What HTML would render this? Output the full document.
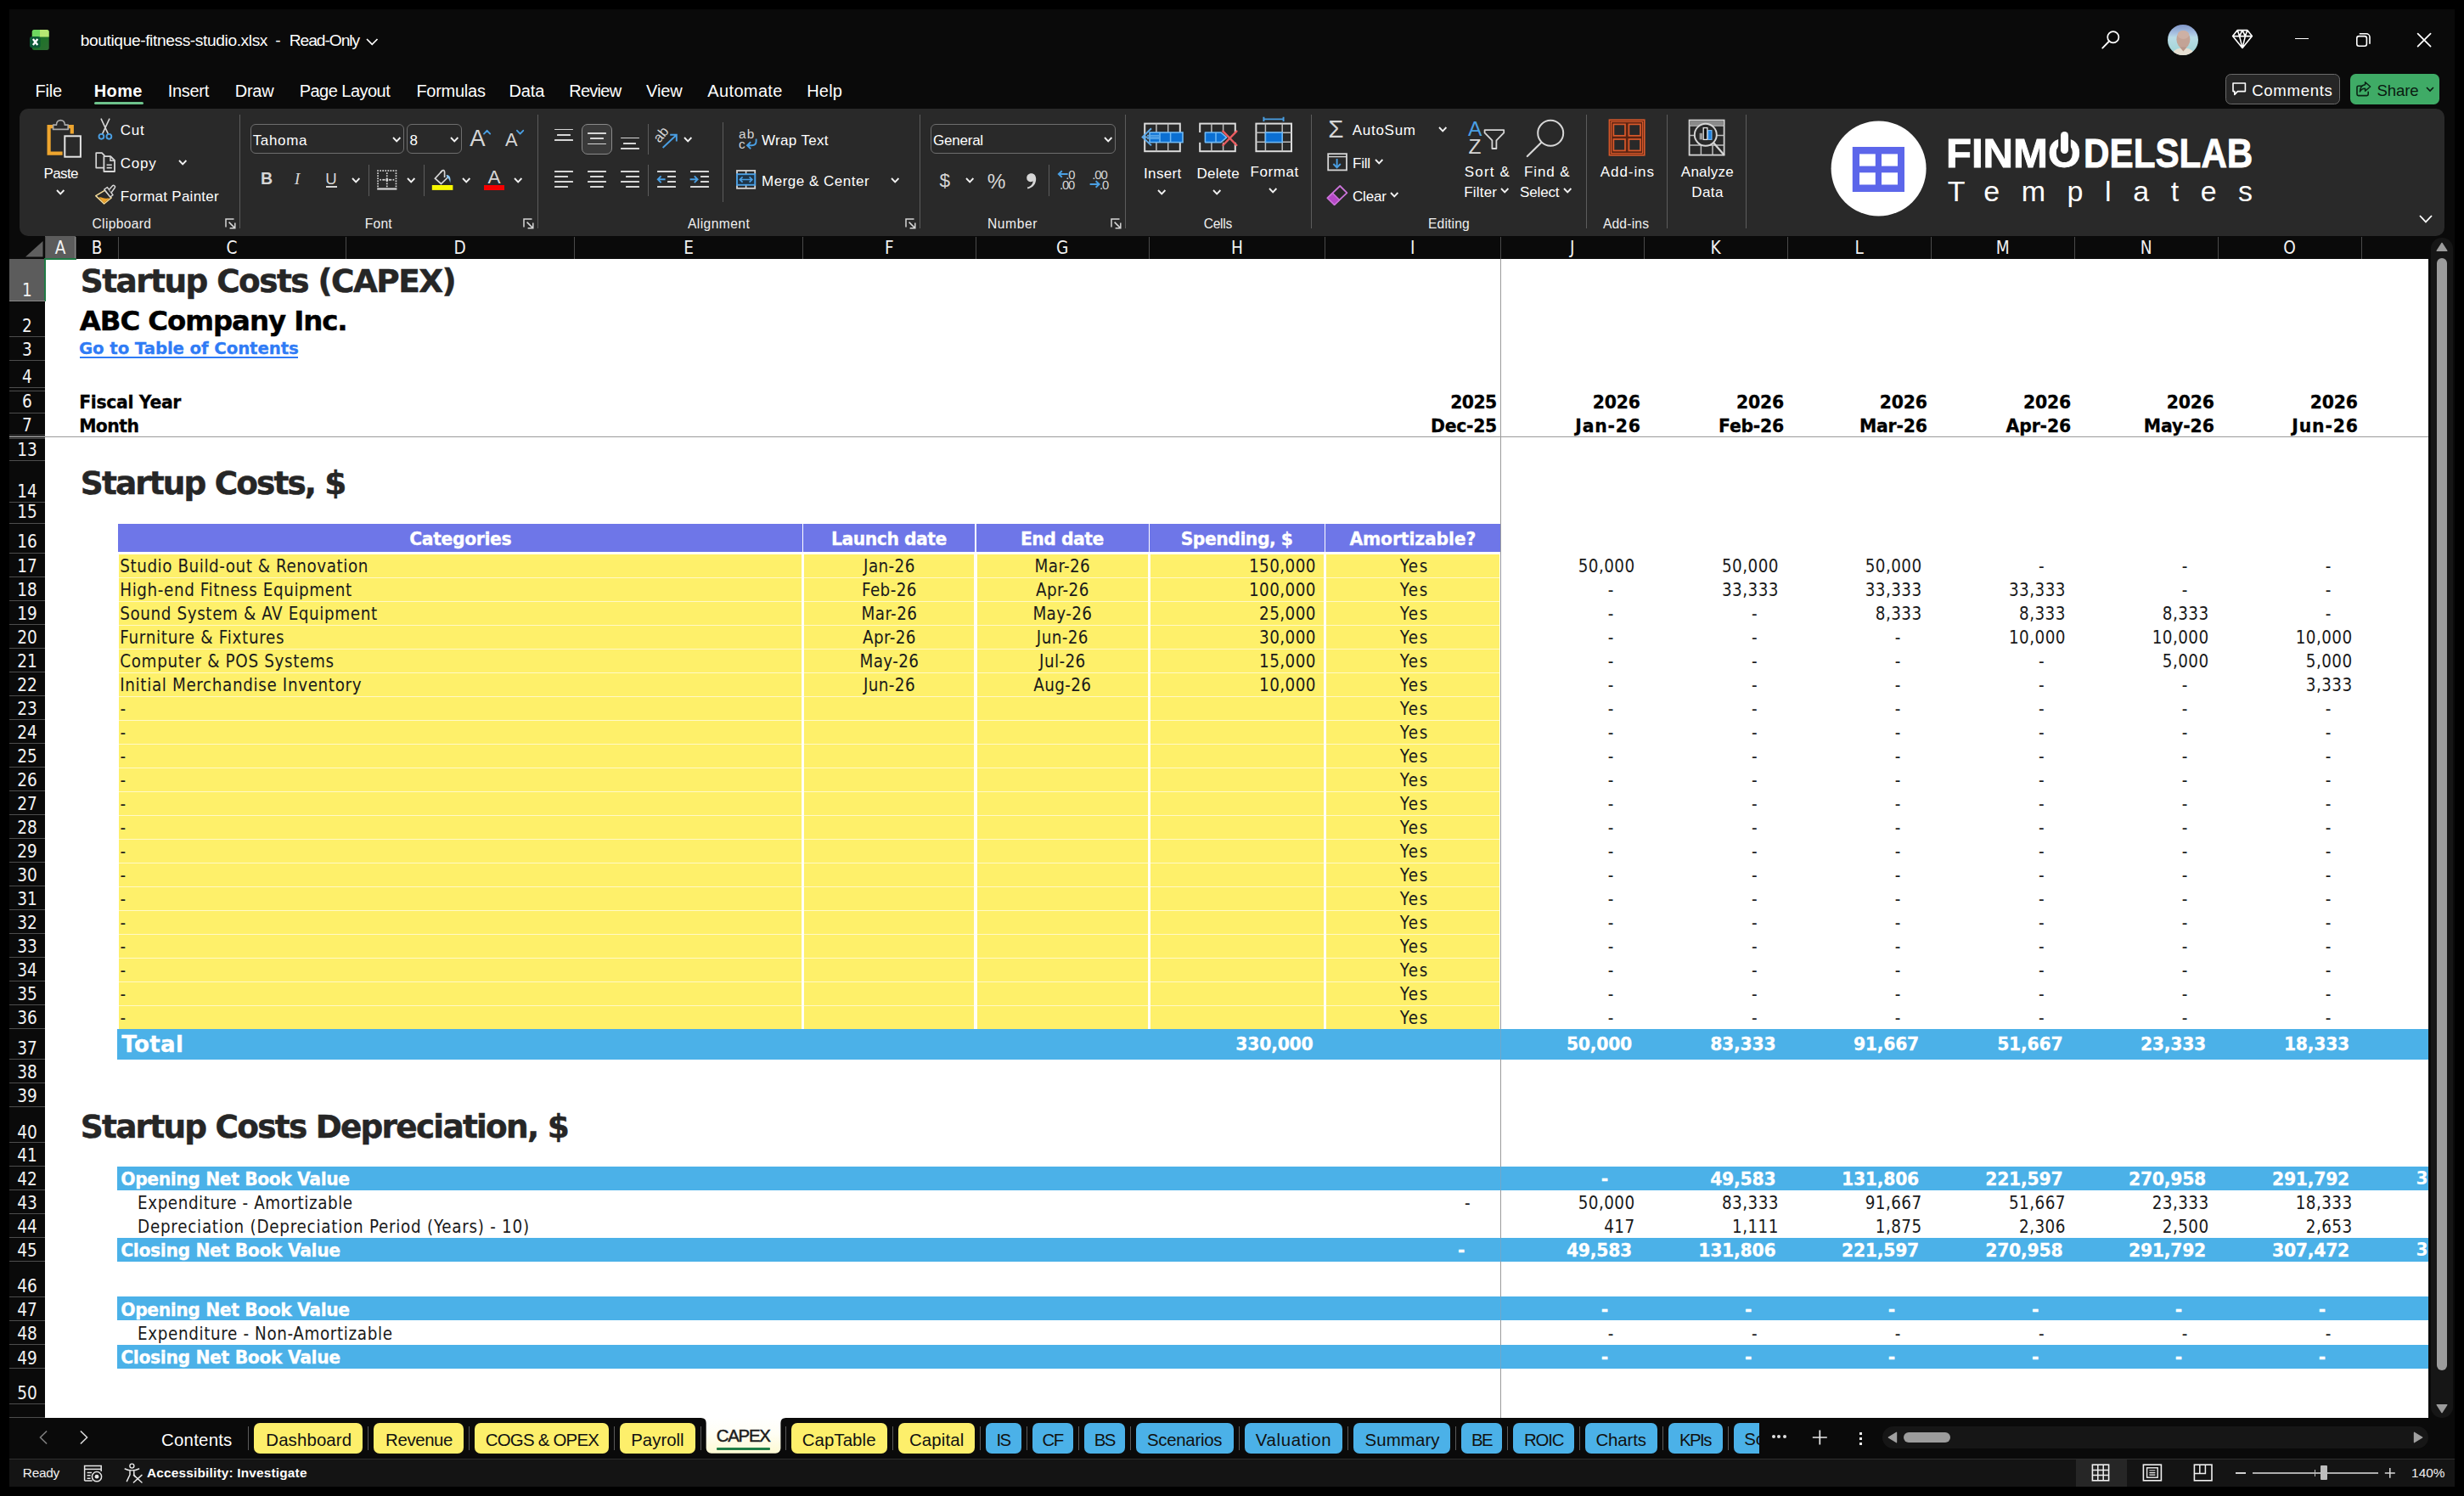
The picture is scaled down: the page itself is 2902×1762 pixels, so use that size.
<!DOCTYPE html>
<html lang="en"><head><meta charset="utf-8"><title>boutique-fitness-studio.xlsx - Excel</title>
<style>
html,body{margin:0;padding:0;background:#000;}
body{width:2902px;height:1762px;position:relative;overflow:hidden;font-family:"Liberation Sans","DejaVu Sans",sans-serif;}
div,span.t,svg,main,header,section,footer{position:absolute;box-sizing:border-box;display:block;}
span.t{line-height:1;white-space:pre;}

</style></head>
<body>
<div style="left:11px;top:11px;width:2880px;height:1740px;background:#0a0a0a;"></div>
<main id="sheet" style="left:0;top:0;width:0;height:0;overflow:visible">
<div style="left:53px;top:305px;width:2807px;height:1365px;background:#fff;"></div>
<div style="left:11px;top:278px;width:2880px;height:27px;background:#0a0a0a;"></div>
<svg style="left:11px;top:278px" width="42" height="27" viewBox="0 0 42 27"><path d="M39.5 6 L39.5 24.5 L19 24.5 Z" fill="#5f5f5f"/></svg>
<div style="left:53px;top:278px;width:36px;height:27px;background:#5c5c5c;"></div>
<div style="left:53px;top:304px;width:37px;height:1.6px;background:#1f7a45;"></div>
<div style="left:88.4px;top:279px;width:1.2px;height:25px;background:#8c8c8c;"></div>
<div style="left:52.6px;top:279px;width:1.2px;height:25px;background:#8c8c8c;"></div>
<span class="t" style="left:64.66px;top:282.40px;font-family:'DejaVu Sans Condensed','DejaVu Sans','Liberation Sans',sans-serif;font-size:20.6px;color:#f2f2f2;">A</span>
<div style="left:88.5px;top:279px;width:1px;height:26px;background:#4a4a4a;"></div>
<span class="t" style="left:107.64px;top:282.40px;font-family:'DejaVu Sans Condensed','DejaVu Sans','Liberation Sans',sans-serif;font-size:20.6px;color:#f2f2f2;">B</span>
<div style="left:138.5px;top:279px;width:1px;height:26px;background:#4a4a4a;"></div>
<span class="t" style="left:266.52px;top:282.40px;font-family:'DejaVu Sans Condensed','DejaVu Sans','Liberation Sans',sans-serif;font-size:20.6px;color:#f2f2f2;">C</span>
<div style="left:406.5px;top:279px;width:1px;height:26px;background:#4a4a4a;"></div>
<span class="t" style="left:534.61px;top:282.40px;font-family:'DejaVu Sans Condensed','DejaVu Sans','Liberation Sans',sans-serif;font-size:20.6px;color:#f2f2f2;">D</span>
<div style="left:676px;top:279px;width:1px;height:26px;background:#4a4a4a;"></div>
<span class="t" style="left:805.14px;top:282.40px;font-family:'DejaVu Sans Condensed','DejaVu Sans','Liberation Sans',sans-serif;font-size:20.6px;color:#f2f2f2;">E</span>
<div style="left:945px;top:279px;width:1px;height:26px;background:#4a4a4a;"></div>
<span class="t" style="left:1041.91px;top:282.40px;font-family:'DejaVu Sans Condensed','DejaVu Sans','Liberation Sans',sans-serif;font-size:20.6px;color:#f2f2f2;">F</span>
<div style="left:1148.5px;top:279px;width:1px;height:26px;background:#4a4a4a;"></div>
<span class="t" style="left:1243.97px;top:282.40px;font-family:'DejaVu Sans Condensed','DejaVu Sans','Liberation Sans',sans-serif;font-size:20.6px;color:#f2f2f2;">G</span>
<div style="left:1352.8px;top:279px;width:1px;height:26px;background:#4a4a4a;"></div>
<span class="t" style="left:1449.88px;top:282.40px;font-family:'DejaVu Sans Condensed','DejaVu Sans','Liberation Sans',sans-serif;font-size:20.6px;color:#f2f2f2;">H</span>
<div style="left:1559.9px;top:279px;width:1px;height:26px;background:#4a4a4a;"></div>
<span class="t" style="left:1661.12px;top:282.40px;font-family:'DejaVu Sans Condensed','DejaVu Sans','Liberation Sans',sans-serif;font-size:20.6px;color:#f2f2f2;">I</span>
<div style="left:1766.8px;top:279px;width:1px;height:26px;background:#4a4a4a;"></div>
<span class="t" style="left:1848.92px;top:282.40px;font-family:'DejaVu Sans Condensed','DejaVu Sans','Liberation Sans',sans-serif;font-size:20.6px;color:#f2f2f2;">J</span>
<div style="left:1935.5px;top:279px;width:1px;height:26px;background:#4a4a4a;"></div>
<span class="t" style="left:2014.57px;top:282.40px;font-family:'DejaVu Sans Condensed','DejaVu Sans','Liberation Sans',sans-serif;font-size:20.6px;color:#f2f2f2;">K</span>
<div style="left:2104.8px;top:279px;width:1px;height:26px;background:#4a4a4a;"></div>
<span class="t" style="left:2184.49px;top:282.40px;font-family:'DejaVu Sans Condensed','DejaVu Sans','Liberation Sans',sans-serif;font-size:20.6px;color:#f2f2f2;">L</span>
<div style="left:2273.5px;top:279px;width:1px;height:26px;background:#4a4a4a;"></div>
<span class="t" style="left:2350.65px;top:282.40px;font-family:'DejaVu Sans Condensed','DejaVu Sans','Liberation Sans',sans-serif;font-size:20.6px;color:#f2f2f2;">M</span>
<div style="left:2442.8px;top:279px;width:1px;height:26px;background:#4a4a4a;"></div>
<span class="t" style="left:2520.72px;top:282.40px;font-family:'DejaVu Sans Condensed','DejaVu Sans','Liberation Sans',sans-serif;font-size:20.6px;color:#f2f2f2;">N</span>
<div style="left:2611.5px;top:279px;width:1px;height:26px;background:#4a4a4a;"></div>
<span class="t" style="left:2689.20px;top:282.40px;font-family:'DejaVu Sans Condensed','DejaVu Sans','Liberation Sans',sans-serif;font-size:20.6px;color:#f2f2f2;">O</span>
<div style="left:2780.5px;top:279px;width:1px;height:26px;background:#4a4a4a;"></div>
<div style="left:2859.5px;top:279px;width:1px;height:26px;background:#4a4a4a;"></div>
<div style="left:52.5px;top:279px;width:1px;height:26px;background:#4a4a4a;"></div>
<div style="left:11px;top:305px;width:42px;height:1365px;background:#0a0a0a;"></div>
<div style="left:11px;top:305px;width:42px;height:49.4px;background:#5c5c5c;"></div>
<div style="left:52px;top:304px;width:1.6px;height:51.4px;background:#1f7a45;"></div>
<span class="t" style="left:26.10px;top:331.80px;font-family:'DejaVu Sans Condensed','DejaVu Sans','Liberation Sans',sans-serif;font-size:20.6px;color:#f2f2f2;">1</span>
<div style="left:11px;top:353.9px;width:42px;height:1px;background:#8a8a8a;"></div>
<span class="t" style="left:26.10px;top:374.20px;font-family:'DejaVu Sans Condensed','DejaVu Sans','Liberation Sans',sans-serif;font-size:20.6px;color:#f2f2f2;">2</span>
<div style="left:11px;top:396.3px;width:42px;height:1px;background:#4d4d4d;"></div>
<span class="t" style="left:26.10px;top:401.80px;font-family:'DejaVu Sans Condensed','DejaVu Sans','Liberation Sans',sans-serif;font-size:20.6px;color:#f2f2f2;">3</span>
<div style="left:11px;top:423.9px;width:42px;height:1px;background:#4d4d4d;"></div>
<span class="t" style="left:26.10px;top:434.10px;font-family:'DejaVu Sans Condensed','DejaVu Sans','Liberation Sans',sans-serif;font-size:20.6px;color:#f2f2f2;">4</span>
<div style="left:11px;top:456.2px;width:42px;height:1px;background:#4d4d4d;"></div>
<span class="t" style="left:26.10px;top:463.40px;font-family:'DejaVu Sans Condensed','DejaVu Sans','Liberation Sans',sans-serif;font-size:20.6px;color:#f2f2f2;">6</span>
<div style="left:11px;top:485.5px;width:42px;height:1px;background:#4d4d4d;"></div>
<span class="t" style="left:26.10px;top:491.40px;font-family:'DejaVu Sans Condensed','DejaVu Sans','Liberation Sans',sans-serif;font-size:20.6px;color:#f2f2f2;">7</span>
<div style="left:11px;top:513.5px;width:42px;height:1px;background:#4d4d4d;"></div>
<span class="t" style="left:20.21px;top:519.80px;font-family:'DejaVu Sans Condensed','DejaVu Sans','Liberation Sans',sans-serif;font-size:20.6px;color:#f2f2f2;">13</span>
<div style="left:11px;top:541.9px;width:42px;height:1px;background:#4d4d4d;"></div>
<span class="t" style="left:20.21px;top:568.60px;font-family:'DejaVu Sans Condensed','DejaVu Sans','Liberation Sans',sans-serif;font-size:20.6px;color:#f2f2f2;">14</span>
<div style="left:11px;top:590.7px;width:42px;height:1px;background:#4d4d4d;"></div>
<span class="t" style="left:20.21px;top:593.40px;font-family:'DejaVu Sans Condensed','DejaVu Sans','Liberation Sans',sans-serif;font-size:20.6px;color:#f2f2f2;">15</span>
<div style="left:11px;top:615.5px;width:42px;height:1px;background:#4d4d4d;"></div>
<span class="t" style="left:20.21px;top:628.40px;font-family:'DejaVu Sans Condensed','DejaVu Sans','Liberation Sans',sans-serif;font-size:20.6px;color:#f2f2f2;">16</span>
<div style="left:11px;top:650.5px;width:42px;height:1px;background:#4d4d4d;"></div>
<span class="t" style="left:20.21px;top:657.00px;font-family:'DejaVu Sans Condensed','DejaVu Sans','Liberation Sans',sans-serif;font-size:20.6px;color:#f2f2f2;">17</span>
<div style="left:11px;top:678.5px;width:42px;height:1px;background:#4d4d4d;"></div>
<span class="t" style="left:20.21px;top:685.00px;font-family:'DejaVu Sans Condensed','DejaVu Sans','Liberation Sans',sans-serif;font-size:20.6px;color:#f2f2f2;">18</span>
<div style="left:11px;top:706.5px;width:42px;height:1px;background:#4d4d4d;"></div>
<span class="t" style="left:20.21px;top:713.00px;font-family:'DejaVu Sans Condensed','DejaVu Sans','Liberation Sans',sans-serif;font-size:20.6px;color:#f2f2f2;">19</span>
<div style="left:11px;top:734.5px;width:42px;height:1px;background:#4d4d4d;"></div>
<span class="t" style="left:20.21px;top:741.00px;font-family:'DejaVu Sans Condensed','DejaVu Sans','Liberation Sans',sans-serif;font-size:20.6px;color:#f2f2f2;">20</span>
<div style="left:11px;top:762.5px;width:42px;height:1px;background:#4d4d4d;"></div>
<span class="t" style="left:20.21px;top:769.00px;font-family:'DejaVu Sans Condensed','DejaVu Sans','Liberation Sans',sans-serif;font-size:20.6px;color:#f2f2f2;">21</span>
<div style="left:11px;top:790.5px;width:42px;height:1px;background:#4d4d4d;"></div>
<span class="t" style="left:20.21px;top:797.00px;font-family:'DejaVu Sans Condensed','DejaVu Sans','Liberation Sans',sans-serif;font-size:20.6px;color:#f2f2f2;">22</span>
<div style="left:11px;top:818.5px;width:42px;height:1px;background:#4d4d4d;"></div>
<span class="t" style="left:20.21px;top:825.00px;font-family:'DejaVu Sans Condensed','DejaVu Sans','Liberation Sans',sans-serif;font-size:20.6px;color:#f2f2f2;">23</span>
<div style="left:11px;top:846.5px;width:42px;height:1px;background:#4d4d4d;"></div>
<span class="t" style="left:20.21px;top:853.00px;font-family:'DejaVu Sans Condensed','DejaVu Sans','Liberation Sans',sans-serif;font-size:20.6px;color:#f2f2f2;">24</span>
<div style="left:11px;top:874.5px;width:42px;height:1px;background:#4d4d4d;"></div>
<span class="t" style="left:20.21px;top:881.00px;font-family:'DejaVu Sans Condensed','DejaVu Sans','Liberation Sans',sans-serif;font-size:20.6px;color:#f2f2f2;">25</span>
<div style="left:11px;top:902.5px;width:42px;height:1px;background:#4d4d4d;"></div>
<span class="t" style="left:20.21px;top:909.00px;font-family:'DejaVu Sans Condensed','DejaVu Sans','Liberation Sans',sans-serif;font-size:20.6px;color:#f2f2f2;">26</span>
<div style="left:11px;top:930.5px;width:42px;height:1px;background:#4d4d4d;"></div>
<span class="t" style="left:20.21px;top:937.00px;font-family:'DejaVu Sans Condensed','DejaVu Sans','Liberation Sans',sans-serif;font-size:20.6px;color:#f2f2f2;">27</span>
<div style="left:11px;top:958.5px;width:42px;height:1px;background:#4d4d4d;"></div>
<span class="t" style="left:20.21px;top:965.00px;font-family:'DejaVu Sans Condensed','DejaVu Sans','Liberation Sans',sans-serif;font-size:20.6px;color:#f2f2f2;">28</span>
<div style="left:11px;top:986.5px;width:42px;height:1px;background:#4d4d4d;"></div>
<span class="t" style="left:20.21px;top:993.00px;font-family:'DejaVu Sans Condensed','DejaVu Sans','Liberation Sans',sans-serif;font-size:20.6px;color:#f2f2f2;">29</span>
<div style="left:11px;top:1014.5px;width:42px;height:1px;background:#4d4d4d;"></div>
<span class="t" style="left:20.21px;top:1021.00px;font-family:'DejaVu Sans Condensed','DejaVu Sans','Liberation Sans',sans-serif;font-size:20.6px;color:#f2f2f2;">30</span>
<div style="left:11px;top:1042.5px;width:42px;height:1px;background:#4d4d4d;"></div>
<span class="t" style="left:20.21px;top:1049.00px;font-family:'DejaVu Sans Condensed','DejaVu Sans','Liberation Sans',sans-serif;font-size:20.6px;color:#f2f2f2;">31</span>
<div style="left:11px;top:1070.5px;width:42px;height:1px;background:#4d4d4d;"></div>
<span class="t" style="left:20.21px;top:1077.00px;font-family:'DejaVu Sans Condensed','DejaVu Sans','Liberation Sans',sans-serif;font-size:20.6px;color:#f2f2f2;">32</span>
<div style="left:11px;top:1098.5px;width:42px;height:1px;background:#4d4d4d;"></div>
<span class="t" style="left:20.21px;top:1105.00px;font-family:'DejaVu Sans Condensed','DejaVu Sans','Liberation Sans',sans-serif;font-size:20.6px;color:#f2f2f2;">33</span>
<div style="left:11px;top:1126.5px;width:42px;height:1px;background:#4d4d4d;"></div>
<span class="t" style="left:20.21px;top:1133.00px;font-family:'DejaVu Sans Condensed','DejaVu Sans','Liberation Sans',sans-serif;font-size:20.6px;color:#f2f2f2;">34</span>
<div style="left:11px;top:1154.5px;width:42px;height:1px;background:#4d4d4d;"></div>
<span class="t" style="left:20.21px;top:1161.00px;font-family:'DejaVu Sans Condensed','DejaVu Sans','Liberation Sans',sans-serif;font-size:20.6px;color:#f2f2f2;">35</span>
<div style="left:11px;top:1182.5px;width:42px;height:1px;background:#4d4d4d;"></div>
<span class="t" style="left:20.21px;top:1189.00px;font-family:'DejaVu Sans Condensed','DejaVu Sans','Liberation Sans',sans-serif;font-size:20.6px;color:#f2f2f2;">36</span>
<div style="left:11px;top:1210.5px;width:42px;height:1px;background:#4d4d4d;"></div>
<span class="t" style="left:20.21px;top:1225.40px;font-family:'DejaVu Sans Condensed','DejaVu Sans','Liberation Sans',sans-serif;font-size:20.6px;color:#f2f2f2;">37</span>
<div style="left:11px;top:1246.9px;width:42px;height:1px;background:#4d4d4d;"></div>
<span class="t" style="left:20.21px;top:1253.40px;font-family:'DejaVu Sans Condensed','DejaVu Sans','Liberation Sans',sans-serif;font-size:20.6px;color:#f2f2f2;">38</span>
<div style="left:11px;top:1274.9px;width:42px;height:1px;background:#4d4d4d;"></div>
<span class="t" style="left:20.21px;top:1281.40px;font-family:'DejaVu Sans Condensed','DejaVu Sans','Liberation Sans',sans-serif;font-size:20.6px;color:#f2f2f2;">39</span>
<div style="left:11px;top:1302.9px;width:42px;height:1px;background:#4d4d4d;"></div>
<span class="t" style="left:20.21px;top:1323.80px;font-family:'DejaVu Sans Condensed','DejaVu Sans','Liberation Sans',sans-serif;font-size:20.6px;color:#f2f2f2;">40</span>
<div style="left:11px;top:1345.3px;width:42px;height:1px;background:#4d4d4d;"></div>
<span class="t" style="left:20.21px;top:1351.20px;font-family:'DejaVu Sans Condensed','DejaVu Sans','Liberation Sans',sans-serif;font-size:20.6px;color:#f2f2f2;">41</span>
<div style="left:11px;top:1372.7px;width:42px;height:1px;background:#4d4d4d;"></div>
<span class="t" style="left:20.21px;top:1379.20px;font-family:'DejaVu Sans Condensed','DejaVu Sans','Liberation Sans',sans-serif;font-size:20.6px;color:#f2f2f2;">42</span>
<div style="left:11px;top:1400.7px;width:42px;height:1px;background:#4d4d4d;"></div>
<span class="t" style="left:20.21px;top:1407.20px;font-family:'DejaVu Sans Condensed','DejaVu Sans','Liberation Sans',sans-serif;font-size:20.6px;color:#f2f2f2;">43</span>
<div style="left:11px;top:1428.7px;width:42px;height:1px;background:#4d4d4d;"></div>
<span class="t" style="left:20.21px;top:1435.20px;font-family:'DejaVu Sans Condensed','DejaVu Sans','Liberation Sans',sans-serif;font-size:20.6px;color:#f2f2f2;">44</span>
<div style="left:11px;top:1456.7px;width:42px;height:1px;background:#4d4d4d;"></div>
<span class="t" style="left:20.21px;top:1463.40px;font-family:'DejaVu Sans Condensed','DejaVu Sans','Liberation Sans',sans-serif;font-size:20.6px;color:#f2f2f2;">45</span>
<div style="left:11px;top:1484.9px;width:42px;height:1px;background:#4d4d4d;"></div>
<span class="t" style="left:20.21px;top:1505.00px;font-family:'DejaVu Sans Condensed','DejaVu Sans','Liberation Sans',sans-serif;font-size:20.6px;color:#f2f2f2;">46</span>
<div style="left:11px;top:1526.5px;width:42px;height:1px;background:#4d4d4d;"></div>
<span class="t" style="left:20.21px;top:1533.00px;font-family:'DejaVu Sans Condensed','DejaVu Sans','Liberation Sans',sans-serif;font-size:20.6px;color:#f2f2f2;">47</span>
<div style="left:11px;top:1554.5px;width:42px;height:1px;background:#4d4d4d;"></div>
<span class="t" style="left:20.21px;top:1561.40px;font-family:'DejaVu Sans Condensed','DejaVu Sans','Liberation Sans',sans-serif;font-size:20.6px;color:#f2f2f2;">48</span>
<div style="left:11px;top:1582.9px;width:42px;height:1px;background:#4d4d4d;"></div>
<span class="t" style="left:20.21px;top:1589.50px;font-family:'DejaVu Sans Condensed','DejaVu Sans','Liberation Sans',sans-serif;font-size:20.6px;color:#f2f2f2;">49</span>
<div style="left:11px;top:1611px;width:42px;height:1px;background:#4d4d4d;"></div>
<span class="t" style="left:20.21px;top:1631.40px;font-family:'DejaVu Sans Condensed','DejaVu Sans','Liberation Sans',sans-serif;font-size:20.6px;color:#f2f2f2;">50</span>
<div style="left:11px;top:1652.9px;width:42px;height:1px;background:#4d4d4d;"></div>
<div style="left:11px;top:459.5px;width:42px;height:1px;background:#4d4d4d;"></div>
<div style="left:11px;top:512px;width:42px;height:1px;background:#4d4d4d;"></div>
<div style="left:11px;top:516px;width:42px;height:1px;background:#4d4d4d;"></div>
<div style="left:11px;top:1669px;width:42px;height:1px;background:#4d4d4d;"></div>
<div style="left:138.8px;top:617px;width:1628.2px;height:32.8px;background:#6e76e8;"></div>
<div style="left:944.8px;top:617px;width:1.4px;height:32.8px;background:#fff;"></div>
<div style="left:1148.3px;top:617px;width:1.4px;height:32.8px;background:#fff;"></div>
<div style="left:1352.6px;top:617px;width:1.4px;height:32.8px;background:#fff;"></div>
<div style="left:1559.7px;top:617px;width:1.4px;height:32.8px;background:#fff;"></div>
<div style="left:140px;top:653px;width:1626.4px;height:559px;background:#fef06a;"></div>
<div style="left:140px;top:679.6px;width:1626.4px;height:1.4px;background:#fff9c6;"></div>
<div style="left:140px;top:707.6px;width:1626.4px;height:1.4px;background:#fff9c6;"></div>
<div style="left:140px;top:735.6px;width:1626.4px;height:1.4px;background:#fff9c6;"></div>
<div style="left:140px;top:763.6px;width:1626.4px;height:1.4px;background:#fff9c6;"></div>
<div style="left:140px;top:791.6px;width:1626.4px;height:1.4px;background:#fff9c6;"></div>
<div style="left:140px;top:819.6px;width:1626.4px;height:1.4px;background:#fff9c6;"></div>
<div style="left:140px;top:847.6px;width:1626.4px;height:1.4px;background:#fff9c6;"></div>
<div style="left:140px;top:875.6px;width:1626.4px;height:1.4px;background:#fff9c6;"></div>
<div style="left:140px;top:903.6px;width:1626.4px;height:1.4px;background:#fff9c6;"></div>
<div style="left:140px;top:931.6px;width:1626.4px;height:1.4px;background:#fff9c6;"></div>
<div style="left:140px;top:959.6px;width:1626.4px;height:1.4px;background:#fff9c6;"></div>
<div style="left:140px;top:987.6px;width:1626.4px;height:1.4px;background:#fff9c6;"></div>
<div style="left:140px;top:1015.6px;width:1626.4px;height:1.4px;background:#fff9c6;"></div>
<div style="left:140px;top:1043.6px;width:1626.4px;height:1.4px;background:#fff9c6;"></div>
<div style="left:140px;top:1071.6px;width:1626.4px;height:1.4px;background:#fff9c6;"></div>
<div style="left:140px;top:1099.6px;width:1626.4px;height:1.4px;background:#fff9c6;"></div>
<div style="left:140px;top:1127.6px;width:1626.4px;height:1.4px;background:#fff9c6;"></div>
<div style="left:140px;top:1155.6px;width:1626.4px;height:1.4px;background:#fff9c6;"></div>
<div style="left:140px;top:1183.6px;width:1626.4px;height:1.4px;background:#fff9c6;"></div>
<div style="left:943.8px;top:653px;width:3.4px;height:559.5px;background:#fffef6;"></div>
<div style="left:1147.3px;top:653px;width:3.4px;height:559.5px;background:#fffef6;"></div>
<div style="left:1351.6px;top:653px;width:3.4px;height:559.5px;background:#fffef6;"></div>
<div style="left:1558.7px;top:653px;width:3.4px;height:559.5px;background:#fffef6;"></div>
<div style="left:138px;top:1212px;width:2722px;height:35.7px;background:#4bb1e8;"></div>
<div style="left:138px;top:1373.5px;width:2722px;height:28px;background:#4bb1e8;"></div>
<div style="left:138px;top:1457.5px;width:2722px;height:28.2px;background:#4bb1e8;"></div>
<div style="left:138px;top:1527.3px;width:2722px;height:28px;background:#4bb1e8;"></div>
<div style="left:138px;top:1583.7px;width:2722px;height:28.1px;background:#4bb1e8;"></div>
<div style="left:53px;top:514px;width:2807px;height:1.2px;background:#9b9b9b;"></div>
<div style="left:11px;top:513.8px;width:42px;height:1.4px;background:#d0d0d0;"></div>
<div style="left:1766.9px;top:305px;width:1.2px;height:1365px;background:#9b9b9b;"></div>
<div style="left:1766.9px;top:1212px;width:1.2px;height:35.7px;background:#6fa7cb;"></div>
<div style="left:1766.9px;top:1373.5px;width:1.2px;height:28px;background:#6fa7cb;"></div>
<div style="left:1766.9px;top:1457.5px;width:1.2px;height:28.2px;background:#6fa7cb;"></div>
<div style="left:1766.9px;top:1527.3px;width:1.2px;height:28px;background:#6fa7cb;"></div>
<div style="left:1766.9px;top:1583.7px;width:1.2px;height:28.1px;background:#6fa7cb;"></div>
<span class="t" style="left:94.82px;top:313.30px;font-family:'DejaVu Sans','Liberation Sans',sans-serif;font-size:37.4px;color:#262626;font-weight:700;letter-spacing:-1.542px;-webkit-text-stroke:0.52px #262626;">Startup Costs (CAPEX)</span>
<span class="t" style="left:93.74px;top:361.60px;font-family:'DejaVu Sans','Liberation Sans',sans-serif;font-size:32.4px;color:#000;font-weight:700;letter-spacing:-1.052px;-webkit-text-stroke:0.45px #000;">ABC Company Inc.</span>
<span class="t" style="left:93.01px;top:401.10px;font-family:'DejaVu Sans','Liberation Sans',sans-serif;font-size:19.8px;color:#2f7bf5;font-weight:700;letter-spacing:-0.130px;-webkit-text-stroke:0.28px #2f7bf5;">Go to Table of Contents</span>
<div style="left:93.7px;top:420px;width:257.2px;height:2px;background:#2f7bf5;"></div>
<span class="t" style="left:93.18px;top:463.50px;font-family:'DejaVu Sans','Liberation Sans',sans-serif;font-size:20.4px;color:#000;font-weight:700;letter-spacing:-0.330px;-webkit-text-stroke:0.29px #000;">Fiscal Year</span>
<span class="t" style="left:93.18px;top:491.60px;font-family:'DejaVu Sans','Liberation Sans',sans-serif;font-size:20.4px;color:#000;font-weight:700;letter-spacing:-0.589px;-webkit-text-stroke:0.29px #000;">Month</span>
<span class="t" style="left:94.82px;top:550.80px;font-family:'DejaVu Sans','Liberation Sans',sans-serif;font-size:37.4px;color:#262626;font-weight:700;letter-spacing:-1.862px;-webkit-text-stroke:0.52px #262626;">Startup Costs, $</span>
<span class="t" style="left:94.82px;top:1308.60px;font-family:'DejaVu Sans','Liberation Sans',sans-serif;font-size:37.4px;color:#262626;font-weight:700;letter-spacing:-1.744px;-webkit-text-stroke:0.52px #262626;">Startup Costs Depreciation, $</span>
<span class="t" style="left:1708.18px;top:463.50px;font-family:'DejaVu Sans','Liberation Sans',sans-serif;font-size:20.4px;color:#000;font-weight:700;letter-spacing:-0.577px;-webkit-text-stroke:0.29px #000;">2025</span>
<span class="t" style="left:1685.08px;top:491.60px;font-family:'DejaVu Sans','Liberation Sans',sans-serif;font-size:20.4px;color:#000;font-weight:700;letter-spacing:-0.310px;-webkit-text-stroke:0.29px #000;">Dec-25</span>
<span class="t" style="left:1875.68px;top:463.50px;font-family:'DejaVu Sans','Liberation Sans',sans-serif;font-size:20.4px;color:#000;font-weight:700;letter-spacing:-0.177px;-webkit-text-stroke:0.29px #000;">2026</span>
<span class="t" style="left:1855.28px;top:491.60px;font-family:'DejaVu Sans','Liberation Sans',sans-serif;font-size:20.4px;color:#000;font-weight:700;letter-spacing:0.787px;-webkit-text-stroke:0.29px #000;">Jan-26</span>
<span class="t" style="left:2044.98px;top:463.50px;font-family:'DejaVu Sans','Liberation Sans',sans-serif;font-size:20.4px;color:#000;font-weight:700;letter-spacing:-0.177px;-webkit-text-stroke:0.29px #000;">2026</span>
<span class="t" style="left:2024.08px;top:491.60px;font-family:'DejaVu Sans','Liberation Sans',sans-serif;font-size:20.4px;color:#000;font-weight:700;letter-spacing:-0.248px;-webkit-text-stroke:0.29px #000;">Feb-26</span>
<span class="t" style="left:2213.68px;top:463.50px;font-family:'DejaVu Sans','Liberation Sans',sans-serif;font-size:20.4px;color:#000;font-weight:700;letter-spacing:-0.177px;-webkit-text-stroke:0.29px #000;">2026</span>
<span class="t" style="left:2189.98px;top:491.60px;font-family:'DejaVu Sans','Liberation Sans',sans-serif;font-size:20.4px;color:#000;font-weight:700;letter-spacing:-0.203px;-webkit-text-stroke:0.29px #000;">Mar-26</span>
<span class="t" style="left:2382.98px;top:463.50px;font-family:'DejaVu Sans','Liberation Sans',sans-serif;font-size:20.4px;color:#000;font-weight:700;letter-spacing:-0.177px;-webkit-text-stroke:0.29px #000;">2026</span>
<span class="t" style="left:2362.58px;top:491.60px;font-family:'DejaVu Sans','Liberation Sans',sans-serif;font-size:20.4px;color:#000;font-weight:700;letter-spacing:-0.129px;-webkit-text-stroke:0.29px #000;">Apr-26</span>
<span class="t" style="left:2551.68px;top:463.50px;font-family:'DejaVu Sans','Liberation Sans',sans-serif;font-size:20.4px;color:#000;font-weight:700;letter-spacing:-0.177px;-webkit-text-stroke:0.29px #000;">2026</span>
<span class="t" style="left:2524.68px;top:491.60px;font-family:'DejaVu Sans','Liberation Sans',sans-serif;font-size:20.4px;color:#000;font-weight:700;letter-spacing:-0.065px;-webkit-text-stroke:0.29px #000;">May-26</span>
<span class="t" style="left:2720.68px;top:463.50px;font-family:'DejaVu Sans','Liberation Sans',sans-serif;font-size:20.4px;color:#000;font-weight:700;letter-spacing:-0.177px;-webkit-text-stroke:0.29px #000;">2026</span>
<span class="t" style="left:2699.28px;top:491.60px;font-family:'DejaVu Sans','Liberation Sans',sans-serif;font-size:20.4px;color:#000;font-weight:700;letter-spacing:0.833px;-webkit-text-stroke:0.29px #000;">Jun-26</span>
<span class="t" style="left:482.28px;top:624.70px;font-family:'DejaVu Sans','Liberation Sans',sans-serif;font-size:20.4px;color:#fff;font-weight:700;letter-spacing:-0.387px;-webkit-text-stroke:0.29px #fff;">Categories</span>
<span class="t" style="left:979.08px;top:624.70px;font-family:'DejaVu Sans','Liberation Sans',sans-serif;font-size:20.4px;color:#fff;font-weight:700;letter-spacing:-0.509px;-webkit-text-stroke:0.29px #fff;">Launch date</span>
<span class="t" style="left:1201.98px;top:624.70px;font-family:'DejaVu Sans','Liberation Sans',sans-serif;font-size:20.4px;color:#fff;font-weight:700;letter-spacing:-0.535px;-webkit-text-stroke:0.29px #fff;">End date</span>
<span class="t" style="left:1390.68px;top:624.70px;font-family:'DejaVu Sans','Liberation Sans',sans-serif;font-size:20.4px;color:#fff;font-weight:700;letter-spacing:-0.502px;-webkit-text-stroke:0.29px #fff;">Spending, $</span>
<span class="t" style="left:1589.43px;top:624.70px;font-family:'DejaVu Sans','Liberation Sans',sans-serif;font-size:20.4px;color:#fff;font-weight:700;letter-spacing:-0.170px;-webkit-text-stroke:0.29px #fff;">Amortizable?</span>
<span class="t" style="left:141.28px;top:656.60px;font-family:'DejaVu Sans Condensed','DejaVu Sans','Liberation Sans',sans-serif;font-size:20.4px;color:#1a1a1a;letter-spacing:0.554px;">Studio Build-out &amp; Renovation</span>
<span class="t" style="left:1017.12px;top:656.60px;font-family:'DejaVu Sans Condensed','DejaVu Sans','Liberation Sans',sans-serif;font-size:20.4px;color:#1a1a1a;letter-spacing:0.400px;">Jan-26</span>
<span class="t" style="left:1218.52px;top:656.60px;font-family:'DejaVu Sans Condensed','DejaVu Sans','Liberation Sans',sans-serif;font-size:20.4px;color:#1a1a1a;letter-spacing:0.400px;">Mar-26</span>
<span class="t" style="left:1470.97px;top:656.60px;font-family:'DejaVu Sans Condensed','DejaVu Sans','Liberation Sans',sans-serif;font-size:20.4px;color:#1a1a1a;letter-spacing:0.450px;">150,000</span>
<span class="t" style="left:1648.85px;top:656.60px;font-family:'DejaVu Sans Condensed','DejaVu Sans','Liberation Sans',sans-serif;font-size:20.4px;color:#1a1a1a;letter-spacing:1.530px;">Yes</span>
<span class="t" style="left:1858.70px;top:656.60px;font-family:'DejaVu Sans Condensed','DejaVu Sans','Liberation Sans',sans-serif;font-size:20.4px;color:#1a1a1a;letter-spacing:0.450px;">50,000</span>
<span class="t" style="left:2028.00px;top:656.60px;font-family:'DejaVu Sans Condensed','DejaVu Sans','Liberation Sans',sans-serif;font-size:20.4px;color:#1a1a1a;letter-spacing:0.450px;">50,000</span>
<span class="t" style="left:2196.70px;top:656.60px;font-family:'DejaVu Sans Condensed','DejaVu Sans','Liberation Sans',sans-serif;font-size:20.4px;color:#1a1a1a;letter-spacing:0.450px;">50,000</span>
<span class="t" style="left:2400.99px;top:656.60px;font-family:'DejaVu Sans Condensed','DejaVu Sans','Liberation Sans',sans-serif;font-size:20.4px;color:#1a1a1a;letter-spacing:1.530px;">-</span>
<span class="t" style="left:2569.69px;top:656.60px;font-family:'DejaVu Sans Condensed','DejaVu Sans','Liberation Sans',sans-serif;font-size:20.4px;color:#1a1a1a;letter-spacing:1.530px;">-</span>
<span class="t" style="left:2738.69px;top:656.60px;font-family:'DejaVu Sans Condensed','DejaVu Sans','Liberation Sans',sans-serif;font-size:20.4px;color:#1a1a1a;letter-spacing:1.530px;">-</span>
<span class="t" style="left:141.28px;top:684.60px;font-family:'DejaVu Sans Condensed','DejaVu Sans','Liberation Sans',sans-serif;font-size:20.4px;color:#1a1a1a;letter-spacing:0.593px;">High-end Fitness Equipment</span>
<span class="t" style="left:1015.08px;top:684.60px;font-family:'DejaVu Sans Condensed','DejaVu Sans','Liberation Sans',sans-serif;font-size:20.4px;color:#1a1a1a;letter-spacing:0.400px;">Feb-26</span>
<span class="t" style="left:1219.95px;top:684.60px;font-family:'DejaVu Sans Condensed','DejaVu Sans','Liberation Sans',sans-serif;font-size:20.4px;color:#1a1a1a;letter-spacing:0.400px;">Apr-26</span>
<span class="t" style="left:1470.97px;top:684.60px;font-family:'DejaVu Sans Condensed','DejaVu Sans','Liberation Sans',sans-serif;font-size:20.4px;color:#1a1a1a;letter-spacing:0.450px;">100,000</span>
<span class="t" style="left:1648.85px;top:684.60px;font-family:'DejaVu Sans Condensed','DejaVu Sans','Liberation Sans',sans-serif;font-size:20.4px;color:#1a1a1a;letter-spacing:1.530px;">Yes</span>
<span class="t" style="left:1893.69px;top:684.60px;font-family:'DejaVu Sans Condensed','DejaVu Sans','Liberation Sans',sans-serif;font-size:20.4px;color:#1a1a1a;letter-spacing:1.530px;">-</span>
<span class="t" style="left:2028.00px;top:684.60px;font-family:'DejaVu Sans Condensed','DejaVu Sans','Liberation Sans',sans-serif;font-size:20.4px;color:#1a1a1a;letter-spacing:0.450px;">33,333</span>
<span class="t" style="left:2196.70px;top:684.60px;font-family:'DejaVu Sans Condensed','DejaVu Sans','Liberation Sans',sans-serif;font-size:20.4px;color:#1a1a1a;letter-spacing:0.450px;">33,333</span>
<span class="t" style="left:2366.00px;top:684.60px;font-family:'DejaVu Sans Condensed','DejaVu Sans','Liberation Sans',sans-serif;font-size:20.4px;color:#1a1a1a;letter-spacing:0.450px;">33,333</span>
<span class="t" style="left:2569.69px;top:684.60px;font-family:'DejaVu Sans Condensed','DejaVu Sans','Liberation Sans',sans-serif;font-size:20.4px;color:#1a1a1a;letter-spacing:1.530px;">-</span>
<span class="t" style="left:2738.69px;top:684.60px;font-family:'DejaVu Sans Condensed','DejaVu Sans','Liberation Sans',sans-serif;font-size:20.4px;color:#1a1a1a;letter-spacing:1.530px;">-</span>
<span class="t" style="left:141.28px;top:712.60px;font-family:'DejaVu Sans Condensed','DejaVu Sans','Liberation Sans',sans-serif;font-size:20.4px;color:#1a1a1a;letter-spacing:0.602px;">Sound System &amp; AV Equipment</span>
<span class="t" style="left:1014.62px;top:712.60px;font-family:'DejaVu Sans Condensed','DejaVu Sans','Liberation Sans',sans-serif;font-size:20.4px;color:#1a1a1a;letter-spacing:0.400px;">Mar-26</span>
<span class="t" style="left:1216.38px;top:712.60px;font-family:'DejaVu Sans Condensed','DejaVu Sans','Liberation Sans',sans-serif;font-size:20.4px;color:#1a1a1a;letter-spacing:0.400px;">May-26</span>
<span class="t" style="left:1483.10px;top:712.60px;font-family:'DejaVu Sans Condensed','DejaVu Sans','Liberation Sans',sans-serif;font-size:20.4px;color:#1a1a1a;letter-spacing:0.450px;">25,000</span>
<span class="t" style="left:1648.85px;top:712.60px;font-family:'DejaVu Sans Condensed','DejaVu Sans','Liberation Sans',sans-serif;font-size:20.4px;color:#1a1a1a;letter-spacing:1.530px;">Yes</span>
<span class="t" style="left:1893.69px;top:712.60px;font-family:'DejaVu Sans Condensed','DejaVu Sans','Liberation Sans',sans-serif;font-size:20.4px;color:#1a1a1a;letter-spacing:1.530px;">-</span>
<span class="t" style="left:2062.99px;top:712.60px;font-family:'DejaVu Sans Condensed','DejaVu Sans','Liberation Sans',sans-serif;font-size:20.4px;color:#1a1a1a;letter-spacing:1.530px;">-</span>
<span class="t" style="left:2208.82px;top:712.60px;font-family:'DejaVu Sans Condensed','DejaVu Sans','Liberation Sans',sans-serif;font-size:20.4px;color:#1a1a1a;letter-spacing:0.450px;">8,333</span>
<span class="t" style="left:2378.12px;top:712.60px;font-family:'DejaVu Sans Condensed','DejaVu Sans','Liberation Sans',sans-serif;font-size:20.4px;color:#1a1a1a;letter-spacing:0.450px;">8,333</span>
<span class="t" style="left:2546.82px;top:712.60px;font-family:'DejaVu Sans Condensed','DejaVu Sans','Liberation Sans',sans-serif;font-size:20.4px;color:#1a1a1a;letter-spacing:0.450px;">8,333</span>
<span class="t" style="left:2738.69px;top:712.60px;font-family:'DejaVu Sans Condensed','DejaVu Sans','Liberation Sans',sans-serif;font-size:20.4px;color:#1a1a1a;letter-spacing:1.530px;">-</span>
<span class="t" style="left:141.28px;top:740.60px;font-family:'DejaVu Sans Condensed','DejaVu Sans','Liberation Sans',sans-serif;font-size:20.4px;color:#1a1a1a;letter-spacing:0.707px;">Furniture &amp; Fixtures</span>
<span class="t" style="left:1016.05px;top:740.60px;font-family:'DejaVu Sans Condensed','DejaVu Sans','Liberation Sans',sans-serif;font-size:20.4px;color:#1a1a1a;letter-spacing:0.400px;">Apr-26</span>
<span class="t" style="left:1220.84px;top:740.60px;font-family:'DejaVu Sans Condensed','DejaVu Sans','Liberation Sans',sans-serif;font-size:20.4px;color:#1a1a1a;letter-spacing:0.400px;">Jun-26</span>
<span class="t" style="left:1483.10px;top:740.60px;font-family:'DejaVu Sans Condensed','DejaVu Sans','Liberation Sans',sans-serif;font-size:20.4px;color:#1a1a1a;letter-spacing:0.450px;">30,000</span>
<span class="t" style="left:1648.85px;top:740.60px;font-family:'DejaVu Sans Condensed','DejaVu Sans','Liberation Sans',sans-serif;font-size:20.4px;color:#1a1a1a;letter-spacing:1.530px;">Yes</span>
<span class="t" style="left:1893.69px;top:740.60px;font-family:'DejaVu Sans Condensed','DejaVu Sans','Liberation Sans',sans-serif;font-size:20.4px;color:#1a1a1a;letter-spacing:1.530px;">-</span>
<span class="t" style="left:2062.99px;top:740.60px;font-family:'DejaVu Sans Condensed','DejaVu Sans','Liberation Sans',sans-serif;font-size:20.4px;color:#1a1a1a;letter-spacing:1.530px;">-</span>
<span class="t" style="left:2231.69px;top:740.60px;font-family:'DejaVu Sans Condensed','DejaVu Sans','Liberation Sans',sans-serif;font-size:20.4px;color:#1a1a1a;letter-spacing:1.530px;">-</span>
<span class="t" style="left:2366.00px;top:740.60px;font-family:'DejaVu Sans Condensed','DejaVu Sans','Liberation Sans',sans-serif;font-size:20.4px;color:#1a1a1a;letter-spacing:0.450px;">10,000</span>
<span class="t" style="left:2534.70px;top:740.60px;font-family:'DejaVu Sans Condensed','DejaVu Sans','Liberation Sans',sans-serif;font-size:20.4px;color:#1a1a1a;letter-spacing:0.450px;">10,000</span>
<span class="t" style="left:2703.70px;top:740.60px;font-family:'DejaVu Sans Condensed','DejaVu Sans','Liberation Sans',sans-serif;font-size:20.4px;color:#1a1a1a;letter-spacing:0.450px;">10,000</span>
<span class="t" style="left:141.28px;top:768.60px;font-family:'DejaVu Sans Condensed','DejaVu Sans','Liberation Sans',sans-serif;font-size:20.4px;color:#1a1a1a;letter-spacing:0.654px;">Computer &amp; POS Systems</span>
<span class="t" style="left:1012.48px;top:768.60px;font-family:'DejaVu Sans Condensed','DejaVu Sans','Liberation Sans',sans-serif;font-size:20.4px;color:#1a1a1a;letter-spacing:0.400px;">May-26</span>
<span class="t" style="left:1224.10px;top:768.60px;font-family:'DejaVu Sans Condensed','DejaVu Sans','Liberation Sans',sans-serif;font-size:20.4px;color:#1a1a1a;letter-spacing:0.400px;">Jul-26</span>
<span class="t" style="left:1483.10px;top:768.60px;font-family:'DejaVu Sans Condensed','DejaVu Sans','Liberation Sans',sans-serif;font-size:20.4px;color:#1a1a1a;letter-spacing:0.450px;">15,000</span>
<span class="t" style="left:1648.85px;top:768.60px;font-family:'DejaVu Sans Condensed','DejaVu Sans','Liberation Sans',sans-serif;font-size:20.4px;color:#1a1a1a;letter-spacing:1.530px;">Yes</span>
<span class="t" style="left:1893.69px;top:768.60px;font-family:'DejaVu Sans Condensed','DejaVu Sans','Liberation Sans',sans-serif;font-size:20.4px;color:#1a1a1a;letter-spacing:1.530px;">-</span>
<span class="t" style="left:2062.99px;top:768.60px;font-family:'DejaVu Sans Condensed','DejaVu Sans','Liberation Sans',sans-serif;font-size:20.4px;color:#1a1a1a;letter-spacing:1.530px;">-</span>
<span class="t" style="left:2231.69px;top:768.60px;font-family:'DejaVu Sans Condensed','DejaVu Sans','Liberation Sans',sans-serif;font-size:20.4px;color:#1a1a1a;letter-spacing:1.530px;">-</span>
<span class="t" style="left:2400.99px;top:768.60px;font-family:'DejaVu Sans Condensed','DejaVu Sans','Liberation Sans',sans-serif;font-size:20.4px;color:#1a1a1a;letter-spacing:1.530px;">-</span>
<span class="t" style="left:2546.82px;top:768.60px;font-family:'DejaVu Sans Condensed','DejaVu Sans','Liberation Sans',sans-serif;font-size:20.4px;color:#1a1a1a;letter-spacing:0.450px;">5,000</span>
<span class="t" style="left:2715.82px;top:768.60px;font-family:'DejaVu Sans Condensed','DejaVu Sans','Liberation Sans',sans-serif;font-size:20.4px;color:#1a1a1a;letter-spacing:0.450px;">5,000</span>
<span class="t" style="left:141.28px;top:796.60px;font-family:'DejaVu Sans Condensed','DejaVu Sans','Liberation Sans',sans-serif;font-size:20.4px;color:#1a1a1a;letter-spacing:0.640px;">Initial Merchandise Inventory</span>
<span class="t" style="left:1016.94px;top:796.60px;font-family:'DejaVu Sans Condensed','DejaVu Sans','Liberation Sans',sans-serif;font-size:20.4px;color:#1a1a1a;letter-spacing:0.400px;">Jun-26</span>
<span class="t" style="left:1217.25px;top:796.60px;font-family:'DejaVu Sans Condensed','DejaVu Sans','Liberation Sans',sans-serif;font-size:20.4px;color:#1a1a1a;letter-spacing:0.400px;">Aug-26</span>
<span class="t" style="left:1483.10px;top:796.60px;font-family:'DejaVu Sans Condensed','DejaVu Sans','Liberation Sans',sans-serif;font-size:20.4px;color:#1a1a1a;letter-spacing:0.450px;">10,000</span>
<span class="t" style="left:1648.85px;top:796.60px;font-family:'DejaVu Sans Condensed','DejaVu Sans','Liberation Sans',sans-serif;font-size:20.4px;color:#1a1a1a;letter-spacing:1.530px;">Yes</span>
<span class="t" style="left:1893.69px;top:796.60px;font-family:'DejaVu Sans Condensed','DejaVu Sans','Liberation Sans',sans-serif;font-size:20.4px;color:#1a1a1a;letter-spacing:1.530px;">-</span>
<span class="t" style="left:2062.99px;top:796.60px;font-family:'DejaVu Sans Condensed','DejaVu Sans','Liberation Sans',sans-serif;font-size:20.4px;color:#1a1a1a;letter-spacing:1.530px;">-</span>
<span class="t" style="left:2231.69px;top:796.60px;font-family:'DejaVu Sans Condensed','DejaVu Sans','Liberation Sans',sans-serif;font-size:20.4px;color:#1a1a1a;letter-spacing:1.530px;">-</span>
<span class="t" style="left:2400.99px;top:796.60px;font-family:'DejaVu Sans Condensed','DejaVu Sans','Liberation Sans',sans-serif;font-size:20.4px;color:#1a1a1a;letter-spacing:1.530px;">-</span>
<span class="t" style="left:2569.69px;top:796.60px;font-family:'DejaVu Sans Condensed','DejaVu Sans','Liberation Sans',sans-serif;font-size:20.4px;color:#1a1a1a;letter-spacing:1.530px;">-</span>
<span class="t" style="left:2715.82px;top:796.60px;font-family:'DejaVu Sans Condensed','DejaVu Sans','Liberation Sans',sans-serif;font-size:20.4px;color:#1a1a1a;letter-spacing:0.450px;">3,333</span>
<span class="t" style="left:141.48px;top:824.60px;font-family:'DejaVu Sans Condensed','DejaVu Sans','Liberation Sans',sans-serif;font-size:20.4px;color:#1a1a1a;letter-spacing:1.530px;">-</span>
<span class="t" style="left:1648.85px;top:824.60px;font-family:'DejaVu Sans Condensed','DejaVu Sans','Liberation Sans',sans-serif;font-size:20.4px;color:#1a1a1a;letter-spacing:1.530px;">Yes</span>
<span class="t" style="left:1893.69px;top:824.60px;font-family:'DejaVu Sans Condensed','DejaVu Sans','Liberation Sans',sans-serif;font-size:20.4px;color:#1a1a1a;letter-spacing:1.530px;">-</span>
<span class="t" style="left:2062.99px;top:824.60px;font-family:'DejaVu Sans Condensed','DejaVu Sans','Liberation Sans',sans-serif;font-size:20.4px;color:#1a1a1a;letter-spacing:1.530px;">-</span>
<span class="t" style="left:2231.69px;top:824.60px;font-family:'DejaVu Sans Condensed','DejaVu Sans','Liberation Sans',sans-serif;font-size:20.4px;color:#1a1a1a;letter-spacing:1.530px;">-</span>
<span class="t" style="left:2400.99px;top:824.60px;font-family:'DejaVu Sans Condensed','DejaVu Sans','Liberation Sans',sans-serif;font-size:20.4px;color:#1a1a1a;letter-spacing:1.530px;">-</span>
<span class="t" style="left:2569.69px;top:824.60px;font-family:'DejaVu Sans Condensed','DejaVu Sans','Liberation Sans',sans-serif;font-size:20.4px;color:#1a1a1a;letter-spacing:1.530px;">-</span>
<span class="t" style="left:2738.69px;top:824.60px;font-family:'DejaVu Sans Condensed','DejaVu Sans','Liberation Sans',sans-serif;font-size:20.4px;color:#1a1a1a;letter-spacing:1.530px;">-</span>
<span class="t" style="left:141.48px;top:852.60px;font-family:'DejaVu Sans Condensed','DejaVu Sans','Liberation Sans',sans-serif;font-size:20.4px;color:#1a1a1a;letter-spacing:1.530px;">-</span>
<span class="t" style="left:1648.85px;top:852.60px;font-family:'DejaVu Sans Condensed','DejaVu Sans','Liberation Sans',sans-serif;font-size:20.4px;color:#1a1a1a;letter-spacing:1.530px;">Yes</span>
<span class="t" style="left:1893.69px;top:852.60px;font-family:'DejaVu Sans Condensed','DejaVu Sans','Liberation Sans',sans-serif;font-size:20.4px;color:#1a1a1a;letter-spacing:1.530px;">-</span>
<span class="t" style="left:2062.99px;top:852.60px;font-family:'DejaVu Sans Condensed','DejaVu Sans','Liberation Sans',sans-serif;font-size:20.4px;color:#1a1a1a;letter-spacing:1.530px;">-</span>
<span class="t" style="left:2231.69px;top:852.60px;font-family:'DejaVu Sans Condensed','DejaVu Sans','Liberation Sans',sans-serif;font-size:20.4px;color:#1a1a1a;letter-spacing:1.530px;">-</span>
<span class="t" style="left:2400.99px;top:852.60px;font-family:'DejaVu Sans Condensed','DejaVu Sans','Liberation Sans',sans-serif;font-size:20.4px;color:#1a1a1a;letter-spacing:1.530px;">-</span>
<span class="t" style="left:2569.69px;top:852.60px;font-family:'DejaVu Sans Condensed','DejaVu Sans','Liberation Sans',sans-serif;font-size:20.4px;color:#1a1a1a;letter-spacing:1.530px;">-</span>
<span class="t" style="left:2738.69px;top:852.60px;font-family:'DejaVu Sans Condensed','DejaVu Sans','Liberation Sans',sans-serif;font-size:20.4px;color:#1a1a1a;letter-spacing:1.530px;">-</span>
<span class="t" style="left:141.48px;top:880.60px;font-family:'DejaVu Sans Condensed','DejaVu Sans','Liberation Sans',sans-serif;font-size:20.4px;color:#1a1a1a;letter-spacing:1.530px;">-</span>
<span class="t" style="left:1648.85px;top:880.60px;font-family:'DejaVu Sans Condensed','DejaVu Sans','Liberation Sans',sans-serif;font-size:20.4px;color:#1a1a1a;letter-spacing:1.530px;">Yes</span>
<span class="t" style="left:1893.69px;top:880.60px;font-family:'DejaVu Sans Condensed','DejaVu Sans','Liberation Sans',sans-serif;font-size:20.4px;color:#1a1a1a;letter-spacing:1.530px;">-</span>
<span class="t" style="left:2062.99px;top:880.60px;font-family:'DejaVu Sans Condensed','DejaVu Sans','Liberation Sans',sans-serif;font-size:20.4px;color:#1a1a1a;letter-spacing:1.530px;">-</span>
<span class="t" style="left:2231.69px;top:880.60px;font-family:'DejaVu Sans Condensed','DejaVu Sans','Liberation Sans',sans-serif;font-size:20.4px;color:#1a1a1a;letter-spacing:1.530px;">-</span>
<span class="t" style="left:2400.99px;top:880.60px;font-family:'DejaVu Sans Condensed','DejaVu Sans','Liberation Sans',sans-serif;font-size:20.4px;color:#1a1a1a;letter-spacing:1.530px;">-</span>
<span class="t" style="left:2569.69px;top:880.60px;font-family:'DejaVu Sans Condensed','DejaVu Sans','Liberation Sans',sans-serif;font-size:20.4px;color:#1a1a1a;letter-spacing:1.530px;">-</span>
<span class="t" style="left:2738.69px;top:880.60px;font-family:'DejaVu Sans Condensed','DejaVu Sans','Liberation Sans',sans-serif;font-size:20.4px;color:#1a1a1a;letter-spacing:1.530px;">-</span>
<span class="t" style="left:141.48px;top:908.60px;font-family:'DejaVu Sans Condensed','DejaVu Sans','Liberation Sans',sans-serif;font-size:20.4px;color:#1a1a1a;letter-spacing:1.530px;">-</span>
<span class="t" style="left:1648.85px;top:908.60px;font-family:'DejaVu Sans Condensed','DejaVu Sans','Liberation Sans',sans-serif;font-size:20.4px;color:#1a1a1a;letter-spacing:1.530px;">Yes</span>
<span class="t" style="left:1893.69px;top:908.60px;font-family:'DejaVu Sans Condensed','DejaVu Sans','Liberation Sans',sans-serif;font-size:20.4px;color:#1a1a1a;letter-spacing:1.530px;">-</span>
<span class="t" style="left:2062.99px;top:908.60px;font-family:'DejaVu Sans Condensed','DejaVu Sans','Liberation Sans',sans-serif;font-size:20.4px;color:#1a1a1a;letter-spacing:1.530px;">-</span>
<span class="t" style="left:2231.69px;top:908.60px;font-family:'DejaVu Sans Condensed','DejaVu Sans','Liberation Sans',sans-serif;font-size:20.4px;color:#1a1a1a;letter-spacing:1.530px;">-</span>
<span class="t" style="left:2400.99px;top:908.60px;font-family:'DejaVu Sans Condensed','DejaVu Sans','Liberation Sans',sans-serif;font-size:20.4px;color:#1a1a1a;letter-spacing:1.530px;">-</span>
<span class="t" style="left:2569.69px;top:908.60px;font-family:'DejaVu Sans Condensed','DejaVu Sans','Liberation Sans',sans-serif;font-size:20.4px;color:#1a1a1a;letter-spacing:1.530px;">-</span>
<span class="t" style="left:2738.69px;top:908.60px;font-family:'DejaVu Sans Condensed','DejaVu Sans','Liberation Sans',sans-serif;font-size:20.4px;color:#1a1a1a;letter-spacing:1.530px;">-</span>
<span class="t" style="left:141.48px;top:936.60px;font-family:'DejaVu Sans Condensed','DejaVu Sans','Liberation Sans',sans-serif;font-size:20.4px;color:#1a1a1a;letter-spacing:1.530px;">-</span>
<span class="t" style="left:1648.85px;top:936.60px;font-family:'DejaVu Sans Condensed','DejaVu Sans','Liberation Sans',sans-serif;font-size:20.4px;color:#1a1a1a;letter-spacing:1.530px;">Yes</span>
<span class="t" style="left:1893.69px;top:936.60px;font-family:'DejaVu Sans Condensed','DejaVu Sans','Liberation Sans',sans-serif;font-size:20.4px;color:#1a1a1a;letter-spacing:1.530px;">-</span>
<span class="t" style="left:2062.99px;top:936.60px;font-family:'DejaVu Sans Condensed','DejaVu Sans','Liberation Sans',sans-serif;font-size:20.4px;color:#1a1a1a;letter-spacing:1.530px;">-</span>
<span class="t" style="left:2231.69px;top:936.60px;font-family:'DejaVu Sans Condensed','DejaVu Sans','Liberation Sans',sans-serif;font-size:20.4px;color:#1a1a1a;letter-spacing:1.530px;">-</span>
<span class="t" style="left:2400.99px;top:936.60px;font-family:'DejaVu Sans Condensed','DejaVu Sans','Liberation Sans',sans-serif;font-size:20.4px;color:#1a1a1a;letter-spacing:1.530px;">-</span>
<span class="t" style="left:2569.69px;top:936.60px;font-family:'DejaVu Sans Condensed','DejaVu Sans','Liberation Sans',sans-serif;font-size:20.4px;color:#1a1a1a;letter-spacing:1.530px;">-</span>
<span class="t" style="left:2738.69px;top:936.60px;font-family:'DejaVu Sans Condensed','DejaVu Sans','Liberation Sans',sans-serif;font-size:20.4px;color:#1a1a1a;letter-spacing:1.530px;">-</span>
<span class="t" style="left:141.48px;top:964.60px;font-family:'DejaVu Sans Condensed','DejaVu Sans','Liberation Sans',sans-serif;font-size:20.4px;color:#1a1a1a;letter-spacing:1.530px;">-</span>
<span class="t" style="left:1648.85px;top:964.60px;font-family:'DejaVu Sans Condensed','DejaVu Sans','Liberation Sans',sans-serif;font-size:20.4px;color:#1a1a1a;letter-spacing:1.530px;">Yes</span>
<span class="t" style="left:1893.69px;top:964.60px;font-family:'DejaVu Sans Condensed','DejaVu Sans','Liberation Sans',sans-serif;font-size:20.4px;color:#1a1a1a;letter-spacing:1.530px;">-</span>
<span class="t" style="left:2062.99px;top:964.60px;font-family:'DejaVu Sans Condensed','DejaVu Sans','Liberation Sans',sans-serif;font-size:20.4px;color:#1a1a1a;letter-spacing:1.530px;">-</span>
<span class="t" style="left:2231.69px;top:964.60px;font-family:'DejaVu Sans Condensed','DejaVu Sans','Liberation Sans',sans-serif;font-size:20.4px;color:#1a1a1a;letter-spacing:1.530px;">-</span>
<span class="t" style="left:2400.99px;top:964.60px;font-family:'DejaVu Sans Condensed','DejaVu Sans','Liberation Sans',sans-serif;font-size:20.4px;color:#1a1a1a;letter-spacing:1.530px;">-</span>
<span class="t" style="left:2569.69px;top:964.60px;font-family:'DejaVu Sans Condensed','DejaVu Sans','Liberation Sans',sans-serif;font-size:20.4px;color:#1a1a1a;letter-spacing:1.530px;">-</span>
<span class="t" style="left:2738.69px;top:964.60px;font-family:'DejaVu Sans Condensed','DejaVu Sans','Liberation Sans',sans-serif;font-size:20.4px;color:#1a1a1a;letter-spacing:1.530px;">-</span>
<span class="t" style="left:141.48px;top:992.60px;font-family:'DejaVu Sans Condensed','DejaVu Sans','Liberation Sans',sans-serif;font-size:20.4px;color:#1a1a1a;letter-spacing:1.530px;">-</span>
<span class="t" style="left:1648.85px;top:992.60px;font-family:'DejaVu Sans Condensed','DejaVu Sans','Liberation Sans',sans-serif;font-size:20.4px;color:#1a1a1a;letter-spacing:1.530px;">Yes</span>
<span class="t" style="left:1893.69px;top:992.60px;font-family:'DejaVu Sans Condensed','DejaVu Sans','Liberation Sans',sans-serif;font-size:20.4px;color:#1a1a1a;letter-spacing:1.530px;">-</span>
<span class="t" style="left:2062.99px;top:992.60px;font-family:'DejaVu Sans Condensed','DejaVu Sans','Liberation Sans',sans-serif;font-size:20.4px;color:#1a1a1a;letter-spacing:1.530px;">-</span>
<span class="t" style="left:2231.69px;top:992.60px;font-family:'DejaVu Sans Condensed','DejaVu Sans','Liberation Sans',sans-serif;font-size:20.4px;color:#1a1a1a;letter-spacing:1.530px;">-</span>
<span class="t" style="left:2400.99px;top:992.60px;font-family:'DejaVu Sans Condensed','DejaVu Sans','Liberation Sans',sans-serif;font-size:20.4px;color:#1a1a1a;letter-spacing:1.530px;">-</span>
<span class="t" style="left:2569.69px;top:992.60px;font-family:'DejaVu Sans Condensed','DejaVu Sans','Liberation Sans',sans-serif;font-size:20.4px;color:#1a1a1a;letter-spacing:1.530px;">-</span>
<span class="t" style="left:2738.69px;top:992.60px;font-family:'DejaVu Sans Condensed','DejaVu Sans','Liberation Sans',sans-serif;font-size:20.4px;color:#1a1a1a;letter-spacing:1.530px;">-</span>
<span class="t" style="left:141.48px;top:1020.60px;font-family:'DejaVu Sans Condensed','DejaVu Sans','Liberation Sans',sans-serif;font-size:20.4px;color:#1a1a1a;letter-spacing:1.530px;">-</span>
<span class="t" style="left:1648.85px;top:1020.60px;font-family:'DejaVu Sans Condensed','DejaVu Sans','Liberation Sans',sans-serif;font-size:20.4px;color:#1a1a1a;letter-spacing:1.530px;">Yes</span>
<span class="t" style="left:1893.69px;top:1020.60px;font-family:'DejaVu Sans Condensed','DejaVu Sans','Liberation Sans',sans-serif;font-size:20.4px;color:#1a1a1a;letter-spacing:1.530px;">-</span>
<span class="t" style="left:2062.99px;top:1020.60px;font-family:'DejaVu Sans Condensed','DejaVu Sans','Liberation Sans',sans-serif;font-size:20.4px;color:#1a1a1a;letter-spacing:1.530px;">-</span>
<span class="t" style="left:2231.69px;top:1020.60px;font-family:'DejaVu Sans Condensed','DejaVu Sans','Liberation Sans',sans-serif;font-size:20.4px;color:#1a1a1a;letter-spacing:1.530px;">-</span>
<span class="t" style="left:2400.99px;top:1020.60px;font-family:'DejaVu Sans Condensed','DejaVu Sans','Liberation Sans',sans-serif;font-size:20.4px;color:#1a1a1a;letter-spacing:1.530px;">-</span>
<span class="t" style="left:2569.69px;top:1020.60px;font-family:'DejaVu Sans Condensed','DejaVu Sans','Liberation Sans',sans-serif;font-size:20.4px;color:#1a1a1a;letter-spacing:1.530px;">-</span>
<span class="t" style="left:2738.69px;top:1020.60px;font-family:'DejaVu Sans Condensed','DejaVu Sans','Liberation Sans',sans-serif;font-size:20.4px;color:#1a1a1a;letter-spacing:1.530px;">-</span>
<span class="t" style="left:141.48px;top:1048.60px;font-family:'DejaVu Sans Condensed','DejaVu Sans','Liberation Sans',sans-serif;font-size:20.4px;color:#1a1a1a;letter-spacing:1.530px;">-</span>
<span class="t" style="left:1648.85px;top:1048.60px;font-family:'DejaVu Sans Condensed','DejaVu Sans','Liberation Sans',sans-serif;font-size:20.4px;color:#1a1a1a;letter-spacing:1.530px;">Yes</span>
<span class="t" style="left:1893.69px;top:1048.60px;font-family:'DejaVu Sans Condensed','DejaVu Sans','Liberation Sans',sans-serif;font-size:20.4px;color:#1a1a1a;letter-spacing:1.530px;">-</span>
<span class="t" style="left:2062.99px;top:1048.60px;font-family:'DejaVu Sans Condensed','DejaVu Sans','Liberation Sans',sans-serif;font-size:20.4px;color:#1a1a1a;letter-spacing:1.530px;">-</span>
<span class="t" style="left:2231.69px;top:1048.60px;font-family:'DejaVu Sans Condensed','DejaVu Sans','Liberation Sans',sans-serif;font-size:20.4px;color:#1a1a1a;letter-spacing:1.530px;">-</span>
<span class="t" style="left:2400.99px;top:1048.60px;font-family:'DejaVu Sans Condensed','DejaVu Sans','Liberation Sans',sans-serif;font-size:20.4px;color:#1a1a1a;letter-spacing:1.530px;">-</span>
<span class="t" style="left:2569.69px;top:1048.60px;font-family:'DejaVu Sans Condensed','DejaVu Sans','Liberation Sans',sans-serif;font-size:20.4px;color:#1a1a1a;letter-spacing:1.530px;">-</span>
<span class="t" style="left:2738.69px;top:1048.60px;font-family:'DejaVu Sans Condensed','DejaVu Sans','Liberation Sans',sans-serif;font-size:20.4px;color:#1a1a1a;letter-spacing:1.530px;">-</span>
<span class="t" style="left:141.48px;top:1076.60px;font-family:'DejaVu Sans Condensed','DejaVu Sans','Liberation Sans',sans-serif;font-size:20.4px;color:#1a1a1a;letter-spacing:1.530px;">-</span>
<span class="t" style="left:1648.85px;top:1076.60px;font-family:'DejaVu Sans Condensed','DejaVu Sans','Liberation Sans',sans-serif;font-size:20.4px;color:#1a1a1a;letter-spacing:1.530px;">Yes</span>
<span class="t" style="left:1893.69px;top:1076.60px;font-family:'DejaVu Sans Condensed','DejaVu Sans','Liberation Sans',sans-serif;font-size:20.4px;color:#1a1a1a;letter-spacing:1.530px;">-</span>
<span class="t" style="left:2062.99px;top:1076.60px;font-family:'DejaVu Sans Condensed','DejaVu Sans','Liberation Sans',sans-serif;font-size:20.4px;color:#1a1a1a;letter-spacing:1.530px;">-</span>
<span class="t" style="left:2231.69px;top:1076.60px;font-family:'DejaVu Sans Condensed','DejaVu Sans','Liberation Sans',sans-serif;font-size:20.4px;color:#1a1a1a;letter-spacing:1.530px;">-</span>
<span class="t" style="left:2400.99px;top:1076.60px;font-family:'DejaVu Sans Condensed','DejaVu Sans','Liberation Sans',sans-serif;font-size:20.4px;color:#1a1a1a;letter-spacing:1.530px;">-</span>
<span class="t" style="left:2569.69px;top:1076.60px;font-family:'DejaVu Sans Condensed','DejaVu Sans','Liberation Sans',sans-serif;font-size:20.4px;color:#1a1a1a;letter-spacing:1.530px;">-</span>
<span class="t" style="left:2738.69px;top:1076.60px;font-family:'DejaVu Sans Condensed','DejaVu Sans','Liberation Sans',sans-serif;font-size:20.4px;color:#1a1a1a;letter-spacing:1.530px;">-</span>
<span class="t" style="left:141.48px;top:1104.60px;font-family:'DejaVu Sans Condensed','DejaVu Sans','Liberation Sans',sans-serif;font-size:20.4px;color:#1a1a1a;letter-spacing:1.530px;">-</span>
<span class="t" style="left:1648.85px;top:1104.60px;font-family:'DejaVu Sans Condensed','DejaVu Sans','Liberation Sans',sans-serif;font-size:20.4px;color:#1a1a1a;letter-spacing:1.530px;">Yes</span>
<span class="t" style="left:1893.69px;top:1104.60px;font-family:'DejaVu Sans Condensed','DejaVu Sans','Liberation Sans',sans-serif;font-size:20.4px;color:#1a1a1a;letter-spacing:1.530px;">-</span>
<span class="t" style="left:2062.99px;top:1104.60px;font-family:'DejaVu Sans Condensed','DejaVu Sans','Liberation Sans',sans-serif;font-size:20.4px;color:#1a1a1a;letter-spacing:1.530px;">-</span>
<span class="t" style="left:2231.69px;top:1104.60px;font-family:'DejaVu Sans Condensed','DejaVu Sans','Liberation Sans',sans-serif;font-size:20.4px;color:#1a1a1a;letter-spacing:1.530px;">-</span>
<span class="t" style="left:2400.99px;top:1104.60px;font-family:'DejaVu Sans Condensed','DejaVu Sans','Liberation Sans',sans-serif;font-size:20.4px;color:#1a1a1a;letter-spacing:1.530px;">-</span>
<span class="t" style="left:2569.69px;top:1104.60px;font-family:'DejaVu Sans Condensed','DejaVu Sans','Liberation Sans',sans-serif;font-size:20.4px;color:#1a1a1a;letter-spacing:1.530px;">-</span>
<span class="t" style="left:2738.69px;top:1104.60px;font-family:'DejaVu Sans Condensed','DejaVu Sans','Liberation Sans',sans-serif;font-size:20.4px;color:#1a1a1a;letter-spacing:1.530px;">-</span>
<span class="t" style="left:141.48px;top:1132.60px;font-family:'DejaVu Sans Condensed','DejaVu Sans','Liberation Sans',sans-serif;font-size:20.4px;color:#1a1a1a;letter-spacing:1.530px;">-</span>
<span class="t" style="left:1648.85px;top:1132.60px;font-family:'DejaVu Sans Condensed','DejaVu Sans','Liberation Sans',sans-serif;font-size:20.4px;color:#1a1a1a;letter-spacing:1.530px;">Yes</span>
<span class="t" style="left:1893.69px;top:1132.60px;font-family:'DejaVu Sans Condensed','DejaVu Sans','Liberation Sans',sans-serif;font-size:20.4px;color:#1a1a1a;letter-spacing:1.530px;">-</span>
<span class="t" style="left:2062.99px;top:1132.60px;font-family:'DejaVu Sans Condensed','DejaVu Sans','Liberation Sans',sans-serif;font-size:20.4px;color:#1a1a1a;letter-spacing:1.530px;">-</span>
<span class="t" style="left:2231.69px;top:1132.60px;font-family:'DejaVu Sans Condensed','DejaVu Sans','Liberation Sans',sans-serif;font-size:20.4px;color:#1a1a1a;letter-spacing:1.530px;">-</span>
<span class="t" style="left:2400.99px;top:1132.60px;font-family:'DejaVu Sans Condensed','DejaVu Sans','Liberation Sans',sans-serif;font-size:20.4px;color:#1a1a1a;letter-spacing:1.530px;">-</span>
<span class="t" style="left:2569.69px;top:1132.60px;font-family:'DejaVu Sans Condensed','DejaVu Sans','Liberation Sans',sans-serif;font-size:20.4px;color:#1a1a1a;letter-spacing:1.530px;">-</span>
<span class="t" style="left:2738.69px;top:1132.60px;font-family:'DejaVu Sans Condensed','DejaVu Sans','Liberation Sans',sans-serif;font-size:20.4px;color:#1a1a1a;letter-spacing:1.530px;">-</span>
<span class="t" style="left:141.48px;top:1160.60px;font-family:'DejaVu Sans Condensed','DejaVu Sans','Liberation Sans',sans-serif;font-size:20.4px;color:#1a1a1a;letter-spacing:1.530px;">-</span>
<span class="t" style="left:1648.85px;top:1160.60px;font-family:'DejaVu Sans Condensed','DejaVu Sans','Liberation Sans',sans-serif;font-size:20.4px;color:#1a1a1a;letter-spacing:1.530px;">Yes</span>
<span class="t" style="left:1893.69px;top:1160.60px;font-family:'DejaVu Sans Condensed','DejaVu Sans','Liberation Sans',sans-serif;font-size:20.4px;color:#1a1a1a;letter-spacing:1.530px;">-</span>
<span class="t" style="left:2062.99px;top:1160.60px;font-family:'DejaVu Sans Condensed','DejaVu Sans','Liberation Sans',sans-serif;font-size:20.4px;color:#1a1a1a;letter-spacing:1.530px;">-</span>
<span class="t" style="left:2231.69px;top:1160.60px;font-family:'DejaVu Sans Condensed','DejaVu Sans','Liberation Sans',sans-serif;font-size:20.4px;color:#1a1a1a;letter-spacing:1.530px;">-</span>
<span class="t" style="left:2400.99px;top:1160.60px;font-family:'DejaVu Sans Condensed','DejaVu Sans','Liberation Sans',sans-serif;font-size:20.4px;color:#1a1a1a;letter-spacing:1.530px;">-</span>
<span class="t" style="left:2569.69px;top:1160.60px;font-family:'DejaVu Sans Condensed','DejaVu Sans','Liberation Sans',sans-serif;font-size:20.4px;color:#1a1a1a;letter-spacing:1.530px;">-</span>
<span class="t" style="left:2738.69px;top:1160.60px;font-family:'DejaVu Sans Condensed','DejaVu Sans','Liberation Sans',sans-serif;font-size:20.4px;color:#1a1a1a;letter-spacing:1.530px;">-</span>
<span class="t" style="left:141.48px;top:1188.60px;font-family:'DejaVu Sans Condensed','DejaVu Sans','Liberation Sans',sans-serif;font-size:20.4px;color:#1a1a1a;letter-spacing:1.530px;">-</span>
<span class="t" style="left:1648.85px;top:1188.60px;font-family:'DejaVu Sans Condensed','DejaVu Sans','Liberation Sans',sans-serif;font-size:20.4px;color:#1a1a1a;letter-spacing:1.530px;">Yes</span>
<span class="t" style="left:1893.69px;top:1188.60px;font-family:'DejaVu Sans Condensed','DejaVu Sans','Liberation Sans',sans-serif;font-size:20.4px;color:#1a1a1a;letter-spacing:1.530px;">-</span>
<span class="t" style="left:2062.99px;top:1188.60px;font-family:'DejaVu Sans Condensed','DejaVu Sans','Liberation Sans',sans-serif;font-size:20.4px;color:#1a1a1a;letter-spacing:1.530px;">-</span>
<span class="t" style="left:2231.69px;top:1188.60px;font-family:'DejaVu Sans Condensed','DejaVu Sans','Liberation Sans',sans-serif;font-size:20.4px;color:#1a1a1a;letter-spacing:1.530px;">-</span>
<span class="t" style="left:2400.99px;top:1188.60px;font-family:'DejaVu Sans Condensed','DejaVu Sans','Liberation Sans',sans-serif;font-size:20.4px;color:#1a1a1a;letter-spacing:1.530px;">-</span>
<span class="t" style="left:2569.69px;top:1188.60px;font-family:'DejaVu Sans Condensed','DejaVu Sans','Liberation Sans',sans-serif;font-size:20.4px;color:#1a1a1a;letter-spacing:1.530px;">-</span>
<span class="t" style="left:2738.69px;top:1188.60px;font-family:'DejaVu Sans Condensed','DejaVu Sans','Liberation Sans',sans-serif;font-size:20.4px;color:#1a1a1a;letter-spacing:1.530px;">-</span>
<span class="t" style="left:143.23px;top:1217.40px;font-family:'DejaVu Sans','Liberation Sans',sans-serif;font-size:26px;color:#fff;font-weight:700;letter-spacing:0.402px;-webkit-text-stroke:0.36px #fff;">Total</span>
<span class="t" style="left:1455.34px;top:1220.40px;font-family:'DejaVu Sans','Liberation Sans',sans-serif;font-size:20.4px;color:#fff;font-weight:700;letter-spacing:-0.250px;-webkit-text-stroke:0.29px #fff;">330,000</span>
<span class="t" style="left:1844.88px;top:1220.40px;font-family:'DejaVu Sans','Liberation Sans',sans-serif;font-size:20.4px;color:#fff;font-weight:700;letter-spacing:-0.250px;-webkit-text-stroke:0.29px #fff;">50,000</span>
<span class="t" style="left:2014.18px;top:1220.40px;font-family:'DejaVu Sans','Liberation Sans',sans-serif;font-size:20.4px;color:#fff;font-weight:700;letter-spacing:-0.250px;-webkit-text-stroke:0.29px #fff;">83,333</span>
<span class="t" style="left:2182.88px;top:1220.40px;font-family:'DejaVu Sans','Liberation Sans',sans-serif;font-size:20.4px;color:#fff;font-weight:700;letter-spacing:-0.250px;-webkit-text-stroke:0.29px #fff;">91,667</span>
<span class="t" style="left:2352.18px;top:1220.40px;font-family:'DejaVu Sans','Liberation Sans',sans-serif;font-size:20.4px;color:#fff;font-weight:700;letter-spacing:-0.250px;-webkit-text-stroke:0.29px #fff;">51,667</span>
<span class="t" style="left:2520.88px;top:1220.40px;font-family:'DejaVu Sans','Liberation Sans',sans-serif;font-size:20.4px;color:#fff;font-weight:700;letter-spacing:-0.250px;-webkit-text-stroke:0.29px #fff;">23,333</span>
<span class="t" style="left:2689.88px;top:1220.40px;font-family:'DejaVu Sans','Liberation Sans',sans-serif;font-size:20.4px;color:#fff;font-weight:700;letter-spacing:-0.250px;-webkit-text-stroke:0.29px #fff;">18,333</span>
<span class="t" style="left:142.28px;top:1378.90px;font-family:'DejaVu Sans','Liberation Sans',sans-serif;font-size:20.4px;color:#fff;font-weight:700;letter-spacing:-0.446px;-webkit-text-stroke:0.29px #fff;">Opening Net Book Value</span>
<span class="t" style="left:162.08px;top:1406.90px;font-family:'DejaVu Sans Condensed','DejaVu Sans','Liberation Sans',sans-serif;font-size:20.4px;color:#1a1a1a;letter-spacing:0.560px;">Expenditure - Amortizable</span>
<span class="t" style="left:162.08px;top:1434.90px;font-family:'DejaVu Sans Condensed','DejaVu Sans','Liberation Sans',sans-serif;font-size:20.4px;color:#1a1a1a;letter-spacing:0.740px;">Depreciation (Depreciation Period (Years) - 10)</span>
<span class="t" style="left:142.28px;top:1463.10px;font-family:'DejaVu Sans','Liberation Sans',sans-serif;font-size:20.4px;color:#fff;font-weight:700;letter-spacing:-0.390px;-webkit-text-stroke:0.29px #fff;">Closing Net Book Value</span>
<span class="t" style="left:142.28px;top:1532.70px;font-family:'DejaVu Sans','Liberation Sans',sans-serif;font-size:20.4px;color:#fff;font-weight:700;letter-spacing:-0.446px;-webkit-text-stroke:0.29px #fff;">Opening Net Book Value</span>
<span class="t" style="left:162.08px;top:1561.10px;font-family:'DejaVu Sans Condensed','DejaVu Sans','Liberation Sans',sans-serif;font-size:20.4px;color:#1a1a1a;letter-spacing:0.628px;">Expenditure - Non-Amortizable</span>
<span class="t" style="left:142.28px;top:1589.20px;font-family:'DejaVu Sans','Liberation Sans',sans-serif;font-size:20.4px;color:#fff;font-weight:700;letter-spacing:-0.390px;-webkit-text-stroke:0.29px #fff;">Closing Net Book Value</span>
<span class="t" style="left:1885.65px;top:1378.90px;font-family:'DejaVu Sans','Liberation Sans',sans-serif;font-size:20.4px;color:#fff;font-weight:700;letter-spacing:1.530px;-webkit-text-stroke:0.29px #fff;">-</span>
<span class="t" style="left:2014.18px;top:1378.90px;font-family:'DejaVu Sans','Liberation Sans',sans-serif;font-size:20.4px;color:#fff;font-weight:700;letter-spacing:-0.250px;-webkit-text-stroke:0.29px #fff;">49,583</span>
<span class="t" style="left:2168.94px;top:1378.90px;font-family:'DejaVu Sans','Liberation Sans',sans-serif;font-size:20.4px;color:#fff;font-weight:700;letter-spacing:-0.250px;-webkit-text-stroke:0.29px #fff;">131,806</span>
<span class="t" style="left:2338.24px;top:1378.90px;font-family:'DejaVu Sans','Liberation Sans',sans-serif;font-size:20.4px;color:#fff;font-weight:700;letter-spacing:-0.250px;-webkit-text-stroke:0.29px #fff;">221,597</span>
<span class="t" style="left:2506.94px;top:1378.90px;font-family:'DejaVu Sans','Liberation Sans',sans-serif;font-size:20.4px;color:#fff;font-weight:700;letter-spacing:-0.250px;-webkit-text-stroke:0.29px #fff;">270,958</span>
<span class="t" style="left:2675.94px;top:1378.90px;font-family:'DejaVu Sans','Liberation Sans',sans-serif;font-size:20.4px;color:#fff;font-weight:700;letter-spacing:-0.250px;-webkit-text-stroke:0.29px #fff;">291,792</span>
<span class="t" style="left:1724.99px;top:1406.90px;font-family:'DejaVu Sans Condensed','DejaVu Sans','Liberation Sans',sans-serif;font-size:20.4px;color:#1a1a1a;letter-spacing:1.530px;">-</span>
<span class="t" style="left:1858.70px;top:1406.90px;font-family:'DejaVu Sans Condensed','DejaVu Sans','Liberation Sans',sans-serif;font-size:20.4px;color:#1a1a1a;letter-spacing:0.450px;">50,000</span>
<span class="t" style="left:2028.00px;top:1406.90px;font-family:'DejaVu Sans Condensed','DejaVu Sans','Liberation Sans',sans-serif;font-size:20.4px;color:#1a1a1a;letter-spacing:0.450px;">83,333</span>
<span class="t" style="left:2196.70px;top:1406.90px;font-family:'DejaVu Sans Condensed','DejaVu Sans','Liberation Sans',sans-serif;font-size:20.4px;color:#1a1a1a;letter-spacing:0.450px;">91,667</span>
<span class="t" style="left:2366.00px;top:1406.90px;font-family:'DejaVu Sans Condensed','DejaVu Sans','Liberation Sans',sans-serif;font-size:20.4px;color:#1a1a1a;letter-spacing:0.450px;">51,667</span>
<span class="t" style="left:2534.70px;top:1406.90px;font-family:'DejaVu Sans Condensed','DejaVu Sans','Liberation Sans',sans-serif;font-size:20.4px;color:#1a1a1a;letter-spacing:0.450px;">23,333</span>
<span class="t" style="left:2703.70px;top:1406.90px;font-family:'DejaVu Sans Condensed','DejaVu Sans','Liberation Sans',sans-serif;font-size:20.4px;color:#1a1a1a;letter-spacing:0.450px;">18,333</span>
<span class="t" style="left:1889.20px;top:1434.90px;font-family:'DejaVu Sans Condensed','DejaVu Sans','Liberation Sans',sans-serif;font-size:20.4px;color:#1a1a1a;letter-spacing:0.450px;">417</span>
<span class="t" style="left:2040.12px;top:1434.90px;font-family:'DejaVu Sans Condensed','DejaVu Sans','Liberation Sans',sans-serif;font-size:20.4px;color:#1a1a1a;letter-spacing:0.450px;">1,111</span>
<span class="t" style="left:2208.82px;top:1434.90px;font-family:'DejaVu Sans Condensed','DejaVu Sans','Liberation Sans',sans-serif;font-size:20.4px;color:#1a1a1a;letter-spacing:0.450px;">1,875</span>
<span class="t" style="left:2378.12px;top:1434.90px;font-family:'DejaVu Sans Condensed','DejaVu Sans','Liberation Sans',sans-serif;font-size:20.4px;color:#1a1a1a;letter-spacing:0.450px;">2,306</span>
<span class="t" style="left:2546.82px;top:1434.90px;font-family:'DejaVu Sans Condensed','DejaVu Sans','Liberation Sans',sans-serif;font-size:20.4px;color:#1a1a1a;letter-spacing:0.450px;">2,500</span>
<span class="t" style="left:2715.82px;top:1434.90px;font-family:'DejaVu Sans Condensed','DejaVu Sans','Liberation Sans',sans-serif;font-size:20.4px;color:#1a1a1a;letter-spacing:0.450px;">2,653</span>
<span class="t" style="left:1716.95px;top:1463.10px;font-family:'DejaVu Sans','Liberation Sans',sans-serif;font-size:20.4px;color:#fff;font-weight:700;letter-spacing:1.530px;-webkit-text-stroke:0.29px #fff;">-</span>
<span class="t" style="left:1844.88px;top:1463.10px;font-family:'DejaVu Sans','Liberation Sans',sans-serif;font-size:20.4px;color:#fff;font-weight:700;letter-spacing:-0.250px;-webkit-text-stroke:0.29px #fff;">49,583</span>
<span class="t" style="left:2000.24px;top:1463.10px;font-family:'DejaVu Sans','Liberation Sans',sans-serif;font-size:20.4px;color:#fff;font-weight:700;letter-spacing:-0.250px;-webkit-text-stroke:0.29px #fff;">131,806</span>
<span class="t" style="left:2168.94px;top:1463.10px;font-family:'DejaVu Sans','Liberation Sans',sans-serif;font-size:20.4px;color:#fff;font-weight:700;letter-spacing:-0.250px;-webkit-text-stroke:0.29px #fff;">221,597</span>
<span class="t" style="left:2338.24px;top:1463.10px;font-family:'DejaVu Sans','Liberation Sans',sans-serif;font-size:20.4px;color:#fff;font-weight:700;letter-spacing:-0.250px;-webkit-text-stroke:0.29px #fff;">270,958</span>
<span class="t" style="left:2506.94px;top:1463.10px;font-family:'DejaVu Sans','Liberation Sans',sans-serif;font-size:20.4px;color:#fff;font-weight:700;letter-spacing:-0.250px;-webkit-text-stroke:0.29px #fff;">291,792</span>
<span class="t" style="left:2675.94px;top:1463.10px;font-family:'DejaVu Sans','Liberation Sans',sans-serif;font-size:20.4px;color:#fff;font-weight:700;letter-spacing:-0.250px;-webkit-text-stroke:0.29px #fff;">307,472</span>
<span class="t" style="left:1885.65px;top:1532.70px;font-family:'DejaVu Sans','Liberation Sans',sans-serif;font-size:20.4px;color:#fff;font-weight:700;letter-spacing:1.530px;-webkit-text-stroke:0.29px #fff;">-</span>
<span class="t" style="left:2054.95px;top:1532.70px;font-family:'DejaVu Sans','Liberation Sans',sans-serif;font-size:20.4px;color:#fff;font-weight:700;letter-spacing:1.530px;-webkit-text-stroke:0.29px #fff;">-</span>
<span class="t" style="left:2223.65px;top:1532.70px;font-family:'DejaVu Sans','Liberation Sans',sans-serif;font-size:20.4px;color:#fff;font-weight:700;letter-spacing:1.530px;-webkit-text-stroke:0.29px #fff;">-</span>
<span class="t" style="left:2392.95px;top:1532.70px;font-family:'DejaVu Sans','Liberation Sans',sans-serif;font-size:20.4px;color:#fff;font-weight:700;letter-spacing:1.530px;-webkit-text-stroke:0.29px #fff;">-</span>
<span class="t" style="left:2561.65px;top:1532.70px;font-family:'DejaVu Sans','Liberation Sans',sans-serif;font-size:20.4px;color:#fff;font-weight:700;letter-spacing:1.530px;-webkit-text-stroke:0.29px #fff;">-</span>
<span class="t" style="left:2730.65px;top:1532.70px;font-family:'DejaVu Sans','Liberation Sans',sans-serif;font-size:20.4px;color:#fff;font-weight:700;letter-spacing:1.530px;-webkit-text-stroke:0.29px #fff;">-</span>
<span class="t" style="left:1893.69px;top:1561.10px;font-family:'DejaVu Sans Condensed','DejaVu Sans','Liberation Sans',sans-serif;font-size:20.4px;color:#1a1a1a;letter-spacing:1.530px;">-</span>
<span class="t" style="left:2062.99px;top:1561.10px;font-family:'DejaVu Sans Condensed','DejaVu Sans','Liberation Sans',sans-serif;font-size:20.4px;color:#1a1a1a;letter-spacing:1.530px;">-</span>
<span class="t" style="left:2231.69px;top:1561.10px;font-family:'DejaVu Sans Condensed','DejaVu Sans','Liberation Sans',sans-serif;font-size:20.4px;color:#1a1a1a;letter-spacing:1.530px;">-</span>
<span class="t" style="left:2400.99px;top:1561.10px;font-family:'DejaVu Sans Condensed','DejaVu Sans','Liberation Sans',sans-serif;font-size:20.4px;color:#1a1a1a;letter-spacing:1.530px;">-</span>
<span class="t" style="left:2569.69px;top:1561.10px;font-family:'DejaVu Sans Condensed','DejaVu Sans','Liberation Sans',sans-serif;font-size:20.4px;color:#1a1a1a;letter-spacing:1.530px;">-</span>
<span class="t" style="left:2738.69px;top:1561.10px;font-family:'DejaVu Sans Condensed','DejaVu Sans','Liberation Sans',sans-serif;font-size:20.4px;color:#1a1a1a;letter-spacing:1.530px;">-</span>
<span class="t" style="left:1885.65px;top:1589.20px;font-family:'DejaVu Sans','Liberation Sans',sans-serif;font-size:20.4px;color:#fff;font-weight:700;letter-spacing:1.530px;-webkit-text-stroke:0.29px #fff;">-</span>
<span class="t" style="left:2054.95px;top:1589.20px;font-family:'DejaVu Sans','Liberation Sans',sans-serif;font-size:20.4px;color:#fff;font-weight:700;letter-spacing:1.530px;-webkit-text-stroke:0.29px #fff;">-</span>
<span class="t" style="left:2223.65px;top:1589.20px;font-family:'DejaVu Sans','Liberation Sans',sans-serif;font-size:20.4px;color:#fff;font-weight:700;letter-spacing:1.530px;-webkit-text-stroke:0.29px #fff;">-</span>
<span class="t" style="left:2392.95px;top:1589.20px;font-family:'DejaVu Sans','Liberation Sans',sans-serif;font-size:20.4px;color:#fff;font-weight:700;letter-spacing:1.530px;-webkit-text-stroke:0.29px #fff;">-</span>
<span class="t" style="left:2561.65px;top:1589.20px;font-family:'DejaVu Sans','Liberation Sans',sans-serif;font-size:20.4px;color:#fff;font-weight:700;letter-spacing:1.530px;-webkit-text-stroke:0.29px #fff;">-</span>
<span class="t" style="left:2730.65px;top:1589.20px;font-family:'DejaVu Sans','Liberation Sans',sans-serif;font-size:20.4px;color:#fff;font-weight:700;letter-spacing:1.530px;-webkit-text-stroke:0.29px #fff;">-</span>
<div style="left:2781px;top:1373.2px;width:79px;height:28px;overflow:hidden"><span class="t" style="left:64.6px;top:5.2px;font-family:'DejaVu Sans','Liberation Sans',sans-serif;font-size:20.4px;font-weight:700;color:#fff;">3</span></div>
<div style="left:2781px;top:1457.2px;width:79px;height:28px;overflow:hidden"><span class="t" style="left:64.6px;top:5.2px;font-family:'DejaVu Sans','Liberation Sans',sans-serif;font-size:20.4px;font-weight:700;color:#fff;">3</span></div>
</main>
<header id="titlebar" style="left:0;top:0;width:0;height:0;overflow:visible">
<svg style="left:34px;top:34px" width="26" height="26" viewBox="0 0 26 26">
<defs><linearGradient id="xlg" x1="0" y1="0" x2="1" y2="1"><stop offset="0" stop-color="#1d6a2a"/><stop offset="0.6" stop-color="#21722a"/><stop offset="1" stop-color="#2f6d33"/></linearGradient></defs>
<rect x="3.8" y="1" width="19.9" height="23.9" rx="2.6" fill="url(#xlg)"/>
<path d="M3.8 3.6 a2.6 2.6 0 0 1 2.6 -2.6 h6.6 v8.6 h-9.2 z" fill="#6dd660"/>
<path d="M13 1 h8.1 a2.6 2.6 0 0 1 2.6 2.6 v6 h-10.7 z" fill="#b7e873"/>
<rect x="1" y="8.9" width="12.6" height="13.4" rx="2.8" fill="#0d5a36"/>
<path d="M4.9 12 L10.3 19 M10.3 12 L4.9 19" stroke="#fff" stroke-width="2.3" fill="none"/>
</svg>
<span class="t" style="left:94.74px;top:37.90px;font-family:'Liberation Sans','DejaVu Sans',sans-serif;font-size:19.2px;color:#fff;letter-spacing:-0.397px;">boutique-fitness-studio.xlsx</span>
<span class="t" style="left:324.34px;top:37.90px;font-family:'Liberation Sans','DejaVu Sans',sans-serif;font-size:19.2px;color:#fff;letter-spacing:0.337px;">-</span>
<span class="t" style="left:340.84px;top:37.90px;font-family:'Liberation Sans','DejaVu Sans',sans-serif;font-size:19.2px;color:#fff;letter-spacing:-1.061px;">Read-Only</span>
<svg style="left:429.95px;top:44.2px" width="16.5" height="10.4"><path d="M2 2 L8.25 8.4 L14.5 2" fill="none" stroke="#fff" stroke-width="1.7" stroke-linecap="butt" stroke-linejoin="miter"/></svg>
<svg style="left:2472px;top:32px" width="30" height="30" viewBox="0 0 30 30"><circle cx="16.8" cy="11.8" r="6.6" fill="none" stroke="#fff" stroke-width="1.7"/><path d="M12.1 16.5 L4.2 24.6" stroke="#fff" stroke-width="1.8" stroke-linecap="round"/></svg>
<svg style="left:2553px;top:28.8px" width="36" height="36" viewBox="0 0 36 36"><defs><clipPath id="av"><circle cx="18" cy="18" r="18"/></clipPath><linearGradient id="avg" x1="0" y1="0" x2="0" y2="1"><stop offset="0" stop-color="#8197c9"/><stop offset="0.3" stop-color="#a9c3e2"/><stop offset="0.42" stop-color="#b9dce6"/><stop offset="1" stop-color="#9ed3d4"/></linearGradient></defs>
<g clip-path="url(#av)"><rect width="36" height="36" fill="url(#avg)"/><ellipse cx="18.4" cy="17.6" rx="8" ry="10.4" fill="#c3a396"/><ellipse cx="18.4" cy="12" rx="6.8" ry="5" fill="#cdb0a4"/><path d="M4 40 C5 30.4 10 27.4 18.4 27.4 C26.8 27.4 31.6 30.4 32.6 40 Z" fill="#e6dfd2"/><path d="M14.2 26.6 L18.4 31.6 L22.6 26.6 Z" fill="#b8968a"/></g></svg>
<svg style="left:2627px;top:33px" width="28" height="26" viewBox="0 0 28 26"><path d="M8.2 2.6 H19.8 L25.4 9.6 L14 23.4 L2.6 9.6 Z M2.6 9.6 H25.4 M8.2 2.6 L10.6 9.6 L14 23.4 L17.4 9.6 L19.8 2.6 M10.6 9.6 L14 2.6 L17.4 9.6" fill="none" stroke="#fff" stroke-width="1.6" stroke-linejoin="round"/></svg>
<div style="left:2703.4px;top:44.8px;width:15.6px;height:1.7px;background:#fff;"></div>
<svg style="left:2772px;top:36px" width="24" height="22" viewBox="0 0 24 22"><rect x="3.8" y="6.6" width="11.6" height="11.6" rx="2.4" fill="none" stroke="#fff" stroke-width="1.6"/><path d="M7.4 3.8 H15 a4 4 0 0 1 4 4 V15.2" fill="none" stroke="#fff" stroke-width="1.6" stroke-linecap="round"/></svg>
<svg style="left:2844px;top:36px" width="22" height="22" viewBox="0 0 22 22"><path d="M3.6 3.6 L18.6 18.6 M18.6 3.6 L3.6 18.6" stroke="#fff" stroke-width="1.7" stroke-linecap="round"/></svg>
<span class="t" style="left:41.50px;top:96.80px;font-family:'Liberation Sans','DejaVu Sans',sans-serif;font-size:20px;color:#fff;letter-spacing:-0.211px;">File</span>
<span class="t" style="left:110.70px;top:96.80px;font-family:'Liberation Sans','DejaVu Sans',sans-serif;font-size:20px;color:#fff;font-weight:700;letter-spacing:0.407px;">Home</span>
<span class="t" style="left:197.70px;top:96.80px;font-family:'Liberation Sans','DejaVu Sans',sans-serif;font-size:20px;color:#fff;letter-spacing:-0.286px;">Insert</span>
<span class="t" style="left:276.70px;top:96.80px;font-family:'Liberation Sans','DejaVu Sans',sans-serif;font-size:20px;color:#fff;letter-spacing:-0.224px;">Draw</span>
<span class="t" style="left:352.70px;top:96.80px;font-family:'Liberation Sans','DejaVu Sans',sans-serif;font-size:20px;color:#fff;letter-spacing:-0.523px;">Page Layout</span>
<span class="t" style="left:490.40px;top:96.80px;font-family:'Liberation Sans','DejaVu Sans',sans-serif;font-size:20px;color:#fff;letter-spacing:-0.266px;">Formulas</span>
<span class="t" style="left:599.50px;top:96.80px;font-family:'Liberation Sans','DejaVu Sans',sans-serif;font-size:20px;color:#fff;letter-spacing:-0.150px;">Data</span>
<span class="t" style="left:670.20px;top:96.80px;font-family:'Liberation Sans','DejaVu Sans',sans-serif;font-size:20px;color:#fff;letter-spacing:-0.716px;">Review</span>
<span class="t" style="left:761.00px;top:96.80px;font-family:'Liberation Sans','DejaVu Sans',sans-serif;font-size:20px;color:#fff;letter-spacing:-0.100px;">View</span>
<span class="t" style="left:833.30px;top:96.80px;font-family:'Liberation Sans','DejaVu Sans',sans-serif;font-size:20px;color:#fff;letter-spacing:0.356px;">Automate</span>
<span class="t" style="left:950.20px;top:96.80px;font-family:'Liberation Sans','DejaVu Sans',sans-serif;font-size:20px;color:#fff;letter-spacing:0.220px;">Help</span>
<div style="left:111.2px;top:119.9px;width:57.6px;height:3.1px;background:#6dc28b;border-radius:1.6px;"></div>
<div style="left:2621.3px;top:86.9px;width:134.8px;height:36px;background:#262626;border:1.2px solid #6a6a6a;border-radius:6.5px;"></div>
<svg style="left:2627px;top:95px" width="22" height="20" viewBox="0 0 22 20"><path d="M3 3 H17.4 V12.6 H8.4 L4.8 16.4 V12.6 H3 Z" fill="none" stroke="#fff" stroke-width="1.6" stroke-linejoin="round"/></svg>
<span class="t" style="left:2652.16px;top:97.80px;font-family:'Liberation Sans','DejaVu Sans',sans-serif;font-size:18.6px;color:#fff;letter-spacing:0.681px;">Comments</span>
<div style="left:2768px;top:86.9px;width:105px;height:36px;background:#3fab66;border-radius:6.5px;"></div>
<svg style="left:2773px;top:94px" width="22" height="22" viewBox="0 0 22 22"><path d="M8.5 7.2 H4.6 a1.6 1.6 0 0 0 -1.6 1.6 V17 a1.6 1.6 0 0 0 1.6 1.6 H14.6 a1.6 1.6 0 0 0 1.6 -1.6 V14.2" fill="none" stroke="#0b2415" stroke-width="1.6" stroke-linecap="round"/><path d="M12.6 2.8 L18.6 8 L12.6 13.2 V10.2 C9.4 10.2 7.6 11.4 6.4 14 C6.6 9.4 8.8 6.2 12.6 5.8 Z" fill="none" stroke="#0b2415" stroke-width="1.5" stroke-linejoin="round"/></svg>
<span class="t" style="left:2799.56px;top:97.80px;font-family:'Liberation Sans','DejaVu Sans',sans-serif;font-size:18.6px;color:#0a1a10;letter-spacing:-0.138px;">Share</span>
<svg style="left:2856.4px;top:100.5px" width="12" height="8"><path d="M2 2 L6 6 L10 2" fill="none" stroke="#0a1a10" stroke-width="1.6" stroke-linecap="butt" stroke-linejoin="miter"/></svg>
</header>
<section id="ribbon" style="left:0;top:0;width:0;height:0;overflow:visible">
<div style="left:23px;top:127.8px;width:2856px;height:150px;background:#292929;border-radius:10px;"></div>
<div style="left:282px;top:135px;width:1.2px;height:134px;background:#5c5c5c;"></div>
<div style="left:632.9px;top:135px;width:1.2px;height:134px;background:#5c5c5c;"></div>
<div style="left:1082.8px;top:135px;width:1.2px;height:134px;background:#5c5c5c;"></div>
<div style="left:1324.9px;top:135px;width:1.2px;height:134px;background:#5c5c5c;"></div>
<div style="left:1543.9px;top:135px;width:1.2px;height:134px;background:#5c5c5c;"></div>
<div style="left:1867.9px;top:135px;width:1.2px;height:134px;background:#5c5c5c;"></div>
<div style="left:1962.8px;top:135px;width:1.2px;height:134px;background:#5c5c5c;"></div>
<div style="left:2056px;top:135px;width:1.2px;height:134px;background:#5c5c5c;"></div>
<div style="left:433.8px;top:194px;width:1.2px;height:36.5px;background:#5c5c5c;"></div>
<div style="left:498.8px;top:194px;width:1.2px;height:36.5px;background:#5c5c5c;"></div>
<div style="left:763.1px;top:146px;width:1.2px;height:35.7px;background:#5c5c5c;"></div>
<div style="left:763.1px;top:194px;width:1.2px;height:36.5px;background:#5c5c5c;"></div>
<div style="left:850.7px;top:144.4px;width:1.2px;height:93.2px;background:#5c5c5c;"></div>
<div style="left:1235px;top:194px;width:1.2px;height:36.5px;background:#5c5c5c;"></div>
<span class="t" style="left:108.50px;top:255.80px;font-family:'Liberation Sans','DejaVu Sans',sans-serif;font-size:15.6px;color:#f0f0f0;letter-spacing:0.332px;">Clipboard</span>
<span class="t" style="left:429.80px;top:255.80px;font-family:'Liberation Sans','DejaVu Sans',sans-serif;font-size:15.6px;color:#f0f0f0;letter-spacing:0.234px;">Font</span>
<span class="t" style="left:809.90px;top:255.80px;font-family:'Liberation Sans','DejaVu Sans',sans-serif;font-size:15.6px;color:#f0f0f0;letter-spacing:0.445px;">Alignment</span>
<span class="t" style="left:1163.00px;top:255.80px;font-family:'Liberation Sans','DejaVu Sans',sans-serif;font-size:15.6px;color:#f0f0f0;letter-spacing:0.587px;">Number</span>
<span class="t" style="left:1417.80px;top:255.80px;font-family:'Liberation Sans','DejaVu Sans',sans-serif;font-size:15.6px;color:#f0f0f0;letter-spacing:-0.317px;">Cells</span>
<span class="t" style="left:1682.00px;top:255.80px;font-family:'Liberation Sans','DejaVu Sans',sans-serif;font-size:15.6px;color:#f0f0f0;letter-spacing:0.169px;">Editing</span>
<span class="t" style="left:1887.90px;top:255.80px;font-family:'Liberation Sans','DejaVu Sans',sans-serif;font-size:15.6px;color:#f0f0f0;letter-spacing:0.205px;">Add-ins</span>
<svg style="left:264.6px;top:256.6px" width="13" height="13" viewBox="0 0 13 13"><path d="M1 10.5 V1 H10.5" fill="none" stroke="#d6d6d6" stroke-width="1.5"/><path d="M4.6 4.6 L11.4 11.4 M11.8 5.6 V11.8 H5.6" fill="none" stroke="#d6d6d6" stroke-width="1.5"/></svg>
<svg style="left:615.8px;top:256.6px" width="13" height="13" viewBox="0 0 13 13"><path d="M1 10.5 V1 H10.5" fill="none" stroke="#d6d6d6" stroke-width="1.5"/><path d="M4.6 4.6 L11.4 11.4 M11.8 5.6 V11.8 H5.6" fill="none" stroke="#d6d6d6" stroke-width="1.5"/></svg>
<svg style="left:1065.8px;top:256.6px" width="13" height="13" viewBox="0 0 13 13"><path d="M1 10.5 V1 H10.5" fill="none" stroke="#d6d6d6" stroke-width="1.5"/><path d="M4.6 4.6 L11.4 11.4 M11.8 5.6 V11.8 H5.6" fill="none" stroke="#d6d6d6" stroke-width="1.5"/></svg>
<svg style="left:1308px;top:256.6px" width="13" height="13" viewBox="0 0 13 13"><path d="M1 10.5 V1 H10.5" fill="none" stroke="#d6d6d6" stroke-width="1.5"/><path d="M4.6 4.6 L11.4 11.4 M11.8 5.6 V11.8 H5.6" fill="none" stroke="#d6d6d6" stroke-width="1.5"/></svg>
<svg style="left:2848.4px;top:251.8px" width="18" height="11.4"><path d="M2 2 L9 9.4 L16 2" fill="none" stroke="#fff" stroke-width="1.7" stroke-linecap="butt" stroke-linejoin="miter"/></svg>
<svg style="left:52px;top:138px" width="48" height="50" viewBox="0 0 48 50">
<path d="M32.8 19.6 V11.2 H5.6 V42.6 H21.6" fill="none" stroke="#eea52e" stroke-width="4.2"/>
<path d="M10.6 14.4 V9.2 H14.4 C14.4 5.2 17 3.6 19.4 3.6 C21.8 3.6 24.4 5.2 24.4 9.2 H28.2 V14.4 Z" fill="#292929" stroke="#a9a9a9" stroke-width="1.7" stroke-linejoin="round"/>
<rect x="24.3" y="22.3" width="18.6" height="24.4" fill="#292929" stroke="#e4e4e4" stroke-width="2"/></svg>
<span class="t" style="left:51.44px;top:195.60px;font-family:'Liberation Sans','DejaVu Sans',sans-serif;font-size:17px;color:#fff;letter-spacing:-0.589px;">Paste</span>
<svg style="left:65.1px;top:222.25px" width="12.4" height="8.3"><path d="M2 2 L6.2 6.3 L10.4 2" fill="none" stroke="#f2f2f2" stroke-width="1.9" stroke-linecap="butt" stroke-linejoin="miter"/></svg>
<svg style="left:112px;top:137px" width="24" height="30" viewBox="0 0 24 30"><path d="M7.2 3.2 L15.6 21.2 M16.8 3.2 L8.4 21.2" stroke="#d6d6d6" stroke-width="1.6" stroke-linecap="round" fill="none"/>
<circle cx="7.4" cy="23.8" r="2.9" fill="none" stroke="#4a9fe3" stroke-width="1.9"/><circle cx="16.4" cy="23.8" r="2.9" fill="none" stroke="#4a9fe3" stroke-width="1.9"/></svg>
<span class="t" style="left:141.84px;top:144.90px;font-family:'Liberation Sans','DejaVu Sans',sans-serif;font-size:17px;color:#fff;letter-spacing:0.731px;">Cut</span>
<svg style="left:110px;top:177px" width="28" height="28" viewBox="0 0 28 28"><path d="M12.2 20.6 H3.2 V3.2 H10 L13.4 6.6" fill="none" stroke="#d6d6d6" stroke-width="1.7" stroke-linejoin="round"/>
<path d="M12.4 7.2 H20.2 L25 12 V25 H12.4 Z" fill="#292929" stroke="#d6d6d6" stroke-width="1.8" stroke-linejoin="round"/>
<path d="M20 7.4 V12.2 H24.8" fill="none" stroke="#d6d6d6" stroke-width="1.5"/>
<path d="M15.6 17.2 H21.8 M15.6 20.6 H21.8" stroke="#d6d6d6" stroke-width="1.6"/></svg>
<span class="t" style="left:141.84px;top:183.50px;font-family:'Liberation Sans','DejaVu Sans',sans-serif;font-size:17px;color:#fff;letter-spacing:0.747px;">Copy</span>
<svg style="left:209.4px;top:187.45px" width="12.4" height="8.3"><path d="M2 2 L6.2 6.3 L10.4 2" fill="none" stroke="#f2f2f2" stroke-width="1.9" stroke-linecap="butt" stroke-linejoin="miter"/></svg>
<svg style="left:110px;top:216px" width="28" height="26" viewBox="0 0 28 26">
<path d="M2.8 14.6 L13.6 8.2 L21.2 17 L12.6 24 Z" fill="#292929" stroke="#f5dc9a" stroke-width="1.5" stroke-linejoin="round"/>
<path d="M6.4 16.6 C9.4 15.4 12 18.6 16.6 17.6 L19.4 17.6 L12.6 23.2 Z" fill="#eba22d"/>
<path d="M12.8 7 L16.4 4.6 L23 13.6 L19.8 16 Z" fill="#292929" stroke="#d6d6d6" stroke-width="1.5" stroke-linejoin="round"/>
<path d="M18.4 7.4 L22.8 2.6 C23.8 1.6 26.4 3.4 25.4 4.8 L21.2 10.8" fill="#292929" stroke="#d6d6d6" stroke-width="1.5" stroke-linejoin="round"/></svg>
<span class="t" style="left:141.84px;top:222.80px;font-family:'Liberation Sans','DejaVu Sans',sans-serif;font-size:17px;color:#fff;letter-spacing:0.269px;">Format Painter</span>
<div style="left:295px;top:146.4px;width:180.6px;height:35px;border:1.2px solid #6e6e6e;border-radius:6px;"></div>
<div style="left:479px;top:146.4px;width:64.8px;height:35px;border:1.2px solid #6e6e6e;border-radius:6px;"></div>
<span class="t" style="left:297.63px;top:156.60px;font-family:'Liberation Sans','DejaVu Sans',sans-serif;font-size:17px;color:#fff;letter-spacing:0.689px;">Tahoma</span>
<svg style="left:461px;top:160.25px" width="12.4" height="8.3"><path d="M2 2 L6.2 6.3 L10.4 2" fill="none" stroke="#f2f2f2" stroke-width="1.9" stroke-linecap="butt" stroke-linejoin="miter"/></svg>
<span class="t" style="left:482.44px;top:156.60px;font-family:'Liberation Sans','DejaVu Sans',sans-serif;font-size:17px;color:#fff;letter-spacing:0.261px;">8</span>
<svg style="left:529px;top:160.25px" width="12.4" height="8.3"><path d="M2 2 L6.2 6.3 L10.4 2" fill="none" stroke="#f2f2f2" stroke-width="1.9" stroke-linecap="butt" stroke-linejoin="miter"/></svg>
<span class="t" style="left:553.37px;top:148.60px;font-family:'Liberation Sans','DejaVu Sans',sans-serif;font-size:27.4px;color:#d6d6d6;letter-spacing:0.785px;">A</span>
<svg style="left:568px;top:151px" width="12" height="9" viewBox="0 0 12 9"><path d="M2 6.6 L5.6 2.8 L9.2 6.6" fill="none" stroke="#4a9fe3" stroke-width="1.9" stroke-linejoin="round" stroke-linecap="round"/></svg>
<span class="t" style="left:595.02px;top:153.60px;font-family:'Liberation Sans','DejaVu Sans',sans-serif;font-size:21.8px;color:#d6d6d6;letter-spacing:0.415px;">A</span>
<svg style="left:606.6px;top:151px" width="12" height="9" viewBox="0 0 12 9"><path d="M2 2.8 L5.6 6.6 L9.2 2.8" fill="none" stroke="#4a9fe3" stroke-width="1.9" stroke-linejoin="round" stroke-linecap="round"/></svg>
<span class="t" style="left:306.92px;top:201.40px;font-family:'Liberation Sans','DejaVu Sans',sans-serif;font-size:19.6px;color:#d6d6d6;font-weight:700;letter-spacing:-1.392px;">B</span>
<span class="t" style="left:346.72px;top:201.40px;font-family:'Liberation Serif','DejaVu Serif',serif;font-size:19.6px;color:#d6d6d6;font-style:italic;letter-spacing:1.470px;">I</span>
<span class="t" style="left:383.36px;top:201.60px;font-family:'Liberation Sans','DejaVu Sans',sans-serif;font-size:18.6px;color:#d6d6d6;letter-spacing:0.636px;">U</span>
<div style="left:383.6px;top:219.4px;width:13.6px;height:1.7px;background:#d6d6d6;"></div>
<svg style="left:412.8px;top:208.25px" width="12.4" height="8.3"><path d="M2 2 L6.2 6.3 L10.4 2" fill="none" stroke="#f2f2f2" stroke-width="1.9" stroke-linecap="butt" stroke-linejoin="miter"/></svg>
<svg style="left:442.6px;top:198.6px" width="26" height="26" viewBox="0 0 26 26"><g fill="#d6d6d6"><rect x="1.20" y="1.2" width="1.7" height="1.7"/><rect x="4.26" y="1.2" width="1.7" height="1.7"/><rect x="1.2" y="4.26" width="1.7" height="1.7"/><rect x="22.62" y="4.26" width="1.7" height="1.7"/><rect x="11.91" y="4.26" width="1.7" height="1.7"/><rect x="4.26" y="11.91" width="1.7" height="1.7"/><rect x="7.32" y="1.2" width="1.7" height="1.7"/><rect x="1.2" y="7.32" width="1.7" height="1.7"/><rect x="22.62" y="7.32" width="1.7" height="1.7"/><rect x="11.91" y="7.32" width="1.7" height="1.7"/><rect x="7.32" y="11.91" width="1.7" height="1.7"/><rect x="10.38" y="1.2" width="1.7" height="1.7"/><rect x="1.2" y="10.38" width="1.7" height="1.7"/><rect x="22.62" y="10.38" width="1.7" height="1.7"/><rect x="11.91" y="10.38" width="1.7" height="1.7"/><rect x="8.85" y="11.91" width="1.7" height="1.7"/><rect x="13.44" y="1.2" width="1.7" height="1.7"/><rect x="1.2" y="13.44" width="1.7" height="1.7"/><rect x="22.62" y="13.44" width="1.7" height="1.7"/><rect x="11.91" y="13.44" width="1.7" height="1.7"/><rect x="14.97" y="11.91" width="1.7" height="1.7"/><rect x="16.50" y="1.2" width="1.7" height="1.7"/><rect x="1.2" y="16.50" width="1.7" height="1.7"/><rect x="22.62" y="16.50" width="1.7" height="1.7"/><rect x="11.91" y="16.50" width="1.7" height="1.7"/><rect x="16.50" y="11.91" width="1.7" height="1.7"/><rect x="19.56" y="1.2" width="1.7" height="1.7"/><rect x="1.2" y="19.56" width="1.7" height="1.7"/><rect x="22.62" y="19.56" width="1.7" height="1.7"/><rect x="11.91" y="19.56" width="1.7" height="1.7"/><rect x="19.56" y="11.91" width="1.7" height="1.7"/><rect x="22.62" y="1.2" width="1.7" height="1.7"/><rect x="11.41" y="11.41" width="2.7" height="2.7"/><rect x="1.2" y="22.4" width="23.2" height="2.2"/></g></svg>
<svg style="left:478px;top:208.25px" width="12.4" height="8.3"><path d="M2 2 L6.2 6.3 L10.4 2" fill="none" stroke="#f2f2f2" stroke-width="1.9" stroke-linecap="butt" stroke-linejoin="miter"/></svg>
<svg style="left:506px;top:196px" width="30" height="30" viewBox="0 0 30 30"><path d="M14.9 5 L6.4 14.2 L13.5 20.5 L21.3 13" fill="none" stroke="#d6d6d6" stroke-width="1.7" stroke-linejoin="miter"/>
<path d="M12.6 7.4 L14.6 5.2 C15.6 4.2 17.6 4.4 17.6 6.4 V13" fill="none" stroke="#d6d6d6" stroke-width="1.7" stroke-linecap="butt"/>
<path d="M19.6 10.2 C23 9.4 25.6 13.2 24.2 19.4 C23.6 16.2 22.6 14.2 20.4 12.8 Z" fill="#8cc8f5"/>
<rect x="2.8" y="22" width="24.6" height="5.9" fill="#f8f800"/></svg>
<svg style="left:542.8px;top:208.25px" width="12.4" height="8.3"><path d="M2 2 L6.2 6.3 L10.4 2" fill="none" stroke="#f2f2f2" stroke-width="1.9" stroke-linecap="butt" stroke-linejoin="miter"/></svg>
<span class="t" style="left:574.38px;top:198.40px;font-family:'Liberation Sans','DejaVu Sans',sans-serif;font-size:22.6px;color:#d6d6d6;letter-spacing:1.156px;">A</span>
<div style="left:569.9px;top:217.9px;width:24.2px;height:6px;background:#f50000;"></div>
<svg style="left:604px;top:208.25px" width="12.4" height="8.3"><path d="M2 2 L6.2 6.3 L10.4 2" fill="none" stroke="#f2f2f2" stroke-width="1.9" stroke-linecap="butt" stroke-linejoin="miter"/></svg>
<div style="left:653.2px;top:151.5px;width:21.7px;height:1.8px;background:#d6d6d6;border-radius:0.5px;"></div>
<div style="left:656.4px;top:157.9px;width:15.3px;height:1.8px;background:#d6d6d6;border-radius:0.5px;"></div>
<div style="left:653.2px;top:164.3px;width:21.7px;height:1.8px;background:#d6d6d6;border-radius:0.5px;"></div>
<div style="left:685px;top:146px;width:36.2px;height:35.6px;background:#3a3a3a;border:1.2px solid #8a8a8a;border-radius:7px;"></div>
<div style="left:692.2px;top:156.1px;width:21.7px;height:1.8px;background:#d6d6d6;border-radius:0.5px;"></div>
<div style="left:695.4px;top:162.3px;width:15.3px;height:1.8px;background:#d6d6d6;border-radius:0.5px;"></div>
<div style="left:692.2px;top:168.5px;width:21.7px;height:1.8px;background:#d6d6d6;border-radius:0.5px;"></div>
<div style="left:731px;top:161.7px;width:21.7px;height:1.8px;background:#d6d6d6;border-radius:0.5px;"></div>
<div style="left:734.2px;top:168px;width:15.3px;height:1.8px;background:#d6d6d6;border-radius:0.5px;"></div>
<div style="left:731px;top:174.3px;width:21.7px;height:1.8px;background:#d6d6d6;border-radius:0.5px;"></div>
<span class="t" style="left:768.6px;top:150.2px;font-family:'Liberation Sans','DejaVu Sans',sans-serif;font-size:16.4px;color:#d6d6d6;transform:rotate(-50deg);transform-origin:50% 50%;">ab</span>
<svg style="left:776px;top:154px" width="26" height="24" viewBox="0 0 26 24"><path d="M4.6 20 L20.4 5.2 M13.2 4.8 H20.8 V12.4" fill="none" stroke="#4a9fe3" stroke-width="1.9" stroke-linejoin="miter"/></svg>
<svg style="left:803.8px;top:160.45px" width="12.4" height="8.3"><path d="M2 2 L6.2 6.3 L10.4 2" fill="none" stroke="#f2f2f2" stroke-width="1.9" stroke-linecap="butt" stroke-linejoin="miter"/></svg>
<div style="left:653.2px;top:201.4px;width:21.7px;height:1.8px;background:#d6d6d6;border-radius:0.5px;"></div>
<div style="left:653.2px;top:207.4px;width:15.7px;height:1.8px;background:#d6d6d6;border-radius:0.5px;"></div>
<div style="left:653.2px;top:213.3px;width:21.7px;height:1.8px;background:#d6d6d6;border-radius:0.5px;"></div>
<div style="left:653.2px;top:219.3px;width:15.7px;height:1.8px;background:#d6d6d6;border-radius:0.5px;"></div>
<div style="left:692.2px;top:201.4px;width:21.7px;height:1.8px;background:#d6d6d6;border-radius:0.5px;"></div>
<div style="left:695.4px;top:207.4px;width:15.3px;height:1.8px;background:#d6d6d6;border-radius:0.5px;"></div>
<div style="left:692.2px;top:213.3px;width:21.7px;height:1.8px;background:#d6d6d6;border-radius:0.5px;"></div>
<div style="left:695.4px;top:219.3px;width:15.3px;height:1.8px;background:#d6d6d6;border-radius:0.5px;"></div>
<div style="left:731px;top:201.4px;width:21.7px;height:1.8px;background:#d6d6d6;border-radius:0.5px;"></div>
<div style="left:737px;top:207.4px;width:15.7px;height:1.8px;background:#d6d6d6;border-radius:0.5px;"></div>
<div style="left:731px;top:213.3px;width:21.7px;height:1.8px;background:#d6d6d6;border-radius:0.5px;"></div>
<div style="left:737px;top:219.3px;width:15.7px;height:1.8px;background:#d6d6d6;border-radius:0.5px;"></div>
<div style="left:774.4px;top:201.4px;width:21.7px;height:1.8px;background:#d6d6d6;border-radius:0.5px;"></div>
<div style="left:786.4px;top:207.4px;width:9.7px;height:1.8px;background:#d6d6d6;border-radius:0.5px;"></div>
<div style="left:786.4px;top:213.3px;width:9.7px;height:1.8px;background:#d6d6d6;border-radius:0.5px;"></div>
<div style="left:774.4px;top:219.3px;width:21.7px;height:1.8px;background:#d6d6d6;border-radius:0.5px;"></div>
<svg style="left:772px;top:205px" width="14" height="13" viewBox="0 0 14 13"><path d="M11.6 6.3 H3 M6.6 2.4 L2.8 6.3 L6.6 10.2" fill="none" stroke="#4a9fe3" stroke-width="1.9"/></svg>
<div style="left:813.4px;top:201.4px;width:21.7px;height:1.8px;background:#d6d6d6;border-radius:0.5px;"></div>
<div style="left:825.4px;top:207.4px;width:9.7px;height:1.8px;background:#d6d6d6;border-radius:0.5px;"></div>
<div style="left:825.4px;top:213.3px;width:9.7px;height:1.8px;background:#d6d6d6;border-radius:0.5px;"></div>
<div style="left:813.4px;top:219.3px;width:21.7px;height:1.8px;background:#d6d6d6;border-radius:0.5px;"></div>
<svg style="left:810.6px;top:205px" width="14" height="13" viewBox="0 0 14 13"><path d="M1.6 6.3 H10.4 M6.8 2.4 L10.6 6.3 L6.8 10.2" fill="none" stroke="#4a9fe3" stroke-width="1.9"/></svg>
<span class="t" style="left:870.11px;top:150.40px;font-family:'Liberation Sans','DejaVu Sans',sans-serif;font-size:15.4px;color:#d6d6d6;letter-spacing:1.155px;">ab</span>
<span class="t" style="left:870.11px;top:161.60px;font-family:'Liberation Sans','DejaVu Sans',sans-serif;font-size:15.4px;color:#d6d6d6;letter-spacing:0.283px;">c</span>
<svg style="left:877px;top:161px" width="17" height="16" viewBox="0 0 17 16"><path d="M13.6 2.6 V5.2 C13.6 8.6 11.6 10.2 8.4 10.2 H3.4 M7.2 6.2 L3 10.2 L7.2 14.2" fill="none" stroke="#4a9fe3" stroke-width="1.9"/></svg>
<span class="t" style="left:897.03px;top:156.60px;font-family:'Liberation Sans','DejaVu Sans',sans-serif;font-size:17px;color:#fff;letter-spacing:0.328px;">Wrap Text</span>
<svg style="left:865px;top:198px" width="27" height="27" viewBox="0 0 27 27"><rect x="3" y="3" width="21.2" height="20.8" fill="none" stroke="#d6d6d6" stroke-width="1.8"/>
<path d="M13.6 3 V7 M13.6 20 V23.8" stroke="#d6d6d6" stroke-width="1.6"/>
<rect x="3" y="7.2" width="21.2" height="12.6" fill="#1d3346" stroke="#4a9fe3" stroke-width="1.9"/>
<path d="M6.6 13.5 H20.6 M9.6 10.4 L6.4 13.5 L9.6 16.6 M17.6 10.4 L20.8 13.5 L17.6 16.6" fill="none" stroke="#4a9fe3" stroke-width="1.7"/></svg>
<span class="t" style="left:897.03px;top:204.60px;font-family:'Liberation Sans','DejaVu Sans',sans-serif;font-size:17px;color:#fff;letter-spacing:0.502px;">Merge &amp; Center</span>
<svg style="left:1047.8px;top:208.25px" width="12.4" height="8.3"><path d="M2 2 L6.2 6.3 L10.4 2" fill="none" stroke="#f2f2f2" stroke-width="1.9" stroke-linecap="butt" stroke-linejoin="miter"/></svg>
<div style="left:1096px;top:146.4px;width:217.6px;height:35px;border:1.2px solid #6e6e6e;border-radius:6px;"></div>
<span class="t" style="left:1099.03px;top:156.60px;font-family:'Liberation Sans','DejaVu Sans',sans-serif;font-size:17px;color:#fff;letter-spacing:-0.226px;">General</span>
<svg style="left:1298.8px;top:160.25px" width="12.4" height="8.3"><path d="M2 2 L6.2 6.3 L10.4 2" fill="none" stroke="#f2f2f2" stroke-width="1.9" stroke-linecap="butt" stroke-linejoin="miter"/></svg>
<span class="t" style="left:1106.58px;top:201.80px;font-family:'Liberation Sans','DejaVu Sans',sans-serif;font-size:22.6px;color:#d6d6d6;letter-spacing:0.456px;">$</span>
<svg style="left:1135.8px;top:208.25px" width="12.4" height="8.3"><path d="M2 2 L6.2 6.3 L10.4 2" fill="none" stroke="#f2f2f2" stroke-width="1.9" stroke-linecap="butt" stroke-linejoin="miter"/></svg>
<span class="t" style="left:1162.70px;top:202.20px;font-family:'Liberation Sans','DejaVu Sans',sans-serif;font-size:24.4px;color:#d6d6d6;letter-spacing:1.830px;">%</span>
<svg style="left:1206px;top:200px" width="18" height="26" viewBox="0 0 18 26"><path d="M3.8 20.6 C8.4 19.4 10.4 16.6 10.6 13.2 C9.8 13.8 8.8 14.2 7.6 14.2 C5 14.2 3.2 12.4 3.2 9.6 C3.2 6.6 5.4 4.2 8.6 4.2 C12 4.2 14.2 6.8 14.2 10.8 C14.2 16.6 10.6 21.2 4.4 22.4 Z" fill="#d6d6d6"/></svg>
<svg style="left:1244px;top:199px" width="16" height="12" viewBox="0 0 16 12"><path d="M13.6 6 H3 M6.8 2.2 L2.8 6 L6.8 9.8" fill="none" stroke="#4a9fe3" stroke-width="1.9"/></svg>
<span class="t" style="left:1255.33px;top:198.60px;font-family:'Liberation Sans','DejaVu Sans',sans-serif;font-size:14.8px;color:#d6d6d6;letter-spacing:-1.100px;">.0</span>
<span class="t" style="left:1247.93px;top:211.20px;font-family:'Liberation Sans','DejaVu Sans',sans-serif;font-size:14.8px;color:#d6d6d6;letter-spacing:-1.100px;">.00</span>
<span class="t" style="left:1286.33px;top:198.60px;font-family:'Liberation Sans','DejaVu Sans',sans-serif;font-size:14.8px;color:#d6d6d6;letter-spacing:-1.100px;">.00</span>
<svg style="left:1282px;top:211px" width="16" height="12" viewBox="0 0 16 12"><path d="M1.6 6 H12.4 M8.6 2.2 L12.6 6 L8.6 9.8" fill="none" stroke="#4a9fe3" stroke-width="1.9"/></svg>
<span class="t" style="left:1294.93px;top:211.20px;font-family:'Liberation Sans','DejaVu Sans',sans-serif;font-size:14.8px;color:#d6d6d6;letter-spacing:-1.100px;">.0</span>
<svg style="left:1342px;top:136px" width="56" height="46" viewBox="0 0 56 46"><rect x="6.2" y="9.6" width="41.6" height="32.6" fill="none" stroke="#dcdcdc" stroke-width="2"/><path d="M19.9 9.6 V42.2" stroke="#bdbdbd" stroke-width="1.5"/><path d="M33.7 9.6 V42.2" stroke="#bdbdbd" stroke-width="1.5"/>
<rect x="12" y="20" width="39" height="11.6" fill="#0b6fd2" stroke="#6fb9f5" stroke-width="1.6"/>
<path d="M24 20 V31.6 M36.6 20 V31.6" stroke="#6fb9f5" stroke-width="1.5"/>
<path d="M14 15.2 L3.6 25.4 L14 35.4 M4.2 25.4 H24" fill="none" stroke="#5ea9e8" stroke-width="2"/>
<path d="M9 23.4 H23 M9 27.4 H23" stroke="#5ea9e8" stroke-width="1.2"/></svg>
<span class="t" style="left:1347.03px;top:195.50px;font-family:'Liberation Sans','DejaVu Sans',sans-serif;font-size:17px;color:#fff;letter-spacing:0.360px;">Insert</span>
<svg style="left:1362px;top:222.35px" width="12.4" height="8.3"><path d="M2 2 L6.2 6.3 L10.4 2" fill="none" stroke="#f2f2f2" stroke-width="1.9" stroke-linecap="butt" stroke-linejoin="miter"/></svg>
<svg style="left:1408px;top:136px" width="56" height="46" viewBox="0 0 56 46"><rect x="5.2" y="9.6" width="41.6" height="32.6" fill="none" stroke="#dcdcdc" stroke-width="2"/><path d="M18.9 9.6 V42.2" stroke="#bdbdbd" stroke-width="1.5"/><path d="M32.6 9.6 V42.2" stroke="#bdbdbd" stroke-width="1.5"/>
<rect x="4" y="20" width="44.4" height="11.8" fill="#292929"/>
<path d="M11.4 20 H30 L36.6 25.8 L30 31.6 H11.4 Z" fill="#0b6fd2" stroke="#6fb9f5" stroke-width="1.6" stroke-linejoin="round"/>
<path d="M24 20 V31.6" stroke="#6fb9f5" stroke-width="1.5"/>
<path d="M32.4 18.6 L48.4 35 M48.4 18.6 L32.4 35" stroke="#ea5c60" stroke-width="2.4" stroke-linecap="round"/></svg>
<span class="t" style="left:1409.43px;top:195.50px;font-family:'Liberation Sans','DejaVu Sans',sans-serif;font-size:17px;color:#fff;letter-spacing:0.238px;">Delete</span>
<svg style="left:1427.1px;top:222.35px" width="12.4" height="8.3"><path d="M2 2 L6.2 6.3 L10.4 2" fill="none" stroke="#f2f2f2" stroke-width="1.9" stroke-linecap="butt" stroke-linejoin="miter"/></svg>
<svg style="left:1474px;top:134px" width="54" height="48" viewBox="0 0 54 48"><rect x="5.4" y="11.6" width="41.6" height="32.6" fill="none" stroke="#dcdcdc" stroke-width="2"/><path d="M16.4 11.6 V44.2" stroke="#bdbdbd" stroke-width="1.5"/><path d="M36.2 11.6 V44.2" stroke="#bdbdbd" stroke-width="1.5"/><path d="M5.4 22.3 H47.0" stroke="#bdbdbd" stroke-width="1.5"/><path d="M5.4 33.3 H47.0" stroke="#bdbdbd" stroke-width="1.5"/>
<rect x="16.4" y="22" width="19.8" height="11.6" fill="#0b6fd2" stroke="#6fb9f5" stroke-width="1.6"/>
<path d="M14.4 6.4 H37.6 M14.4 3.8 V9 M37.6 3.8 V9" stroke="#4a9fe3" stroke-width="1.9" fill="none"/></svg>
<span class="t" style="left:1472.43px;top:193.80px;font-family:'Liberation Sans','DejaVu Sans',sans-serif;font-size:17px;color:#fff;letter-spacing:0.617px;">Format</span>
<svg style="left:1493.1px;top:220.25px" width="12.4" height="8.3"><path d="M2 2 L6.2 6.3 L10.4 2" fill="none" stroke="#f2f2f2" stroke-width="1.9" stroke-linecap="butt" stroke-linejoin="miter"/></svg>
<span class="t" style="left:1564.27px;top:137.40px;font-family:'Liberation Sans','DejaVu Sans',sans-serif;font-size:29.6px;color:#d6d6d6;letter-spacing:2.220px;">Σ</span>
<span class="t" style="left:1592.83px;top:144.90px;font-family:'Liberation Sans','DejaVu Sans',sans-serif;font-size:17px;color:#fff;letter-spacing:0.699px;">AutoSum</span>
<svg style="left:1693px;top:148.45px" width="12.4" height="8.3"><path d="M2 2 L6.2 6.3 L10.4 2" fill="none" stroke="#f2f2f2" stroke-width="1.9" stroke-linecap="butt" stroke-linejoin="miter"/></svg>
<svg style="left:1561px;top:178px" width="28" height="26" viewBox="0 0 28 26"><rect x="3.2" y="3.2" width="21.8" height="19.2" fill="none" stroke="#d6d6d6" stroke-width="1.8"/><path d="M3.2 6.6 H25" stroke="#d6d6d6" stroke-width="1.4"/>
<path d="M13.6 9 V19 M9.4 15 L13.6 19.4 L17.8 15" fill="none" stroke="#4a9fe3" stroke-width="1.9"/></svg>
<span class="t" style="left:1593.03px;top:183.50px;font-family:'Liberation Sans','DejaVu Sans',sans-serif;font-size:17px;color:#fff;letter-spacing:-0.196px;">Fill</span>
<svg style="left:1618.4px;top:186.25px" width="12.4" height="8.3"><path d="M2 2 L6.2 6.3 L10.4 2" fill="none" stroke="#f2f2f2" stroke-width="1.9" stroke-linecap="butt" stroke-linejoin="miter"/></svg>
<svg style="left:1560px;top:216px" width="30" height="28" viewBox="0 0 30 28"><path d="M18.2 3 L26.4 11.2 L11.6 25.2 L3.4 17.2 Z" fill="none" stroke="#cc74da" stroke-width="1.8" stroke-linejoin="round"/>
<path d="M9.6 11.6 L17.6 19.6 L11.6 25.2 L3.4 17.2 Z" fill="#b548c6" stroke="#cc74da" stroke-width="1.4" stroke-linejoin="round"/></svg>
<span class="t" style="left:1593.03px;top:222.80px;font-family:'Liberation Sans','DejaVu Sans',sans-serif;font-size:17px;color:#fff;letter-spacing:-0.174px;">Clear</span>
<svg style="left:1636.3px;top:225.05px" width="12.4" height="8.3"><path d="M2 2 L6.2 6.3 L10.4 2" fill="none" stroke="#f2f2f2" stroke-width="1.9" stroke-linecap="butt" stroke-linejoin="miter"/></svg>
<span class="t" style="left:1728.89px;top:140.20px;font-family:'Liberation Sans','DejaVu Sans',sans-serif;font-size:24.6px;color:#4a9fe3;letter-spacing:0.808px;">A</span>
<span class="t" style="left:1729.49px;top:161.40px;font-family:'Liberation Sans','DejaVu Sans',sans-serif;font-size:24.6px;color:#d6d6d6;letter-spacing:0.383px;">Z</span>
<svg style="left:1745px;top:149px" width="30" height="30" viewBox="0 0 30 30"><path d="M3.6 4.2 H26.2 V7.4 L17.4 16.4 V26 H12.4 V16.4 L3.6 7.4 Z" fill="none" stroke="#d6d6d6" stroke-width="1.8" stroke-linejoin="round"/></svg>
<span class="t" style="left:1724.83px;top:193.80px;font-family:'Liberation Sans','DejaVu Sans',sans-serif;font-size:17px;color:#fff;letter-spacing:1.176px;">Sort &amp;</span>
<span class="t" style="left:1724.23px;top:217.60px;font-family:'Liberation Sans','DejaVu Sans',sans-serif;font-size:17px;color:#fff;letter-spacing:0.190px;">Filter</span>
<svg style="left:1766.3px;top:220.45px" width="12.4" height="8.3"><path d="M2 2 L6.2 6.3 L10.4 2" fill="none" stroke="#f2f2f2" stroke-width="1.9" stroke-linecap="butt" stroke-linejoin="miter"/></svg>
<svg style="left:1794px;top:138px" width="52" height="50" viewBox="0 0 52 50"><circle cx="32.2" cy="18.8" r="15" fill="none" stroke="#d6d6d6" stroke-width="2"/><path d="M21.4 29.8 L4.8 46" stroke="#d6d6d6" stroke-width="2.2" stroke-linecap="round"/></svg>
<span class="t" style="left:1795.03px;top:193.80px;font-family:'Liberation Sans','DejaVu Sans',sans-serif;font-size:17px;color:#fff;letter-spacing:0.878px;">Find &amp;</span>
<span class="t" style="left:1790.03px;top:217.60px;font-family:'Liberation Sans','DejaVu Sans',sans-serif;font-size:17px;color:#fff;letter-spacing:-0.144px;">Select</span>
<svg style="left:1839.6px;top:220.45px" width="12.4" height="8.3"><path d="M2 2 L6.2 6.3 L10.4 2" fill="none" stroke="#f2f2f2" stroke-width="1.9" stroke-linecap="butt" stroke-linejoin="miter"/></svg>
<svg style="left:1892px;top:138px" width="48" height="48" viewBox="0 0 48 48"><rect x="3.4" y="3.2" width="41.4" height="41.6" fill="#5a2312" stroke="#d9592b" stroke-width="1.6"/>
<rect x="5.6" y="5.4" width="37" height="37.2" fill="none" stroke="#d9592b" stroke-width="1.2"/>
<g fill="#292929" stroke="#d9592b" stroke-width="1.7"><rect x="8.4" y="8.4" width="13.6" height="13.4"/><rect x="26.4" y="8.4" width="13.6" height="13.4"/><rect x="8.4" y="26" width="13.6" height="13.4"/><rect x="26.4" y="26" width="13.6" height="13.4"/></g></svg>
<span class="t" style="left:1884.83px;top:193.80px;font-family:'Liberation Sans','DejaVu Sans',sans-serif;font-size:17px;color:#fff;letter-spacing:0.915px;">Add-ins</span>
<svg style="left:1986px;top:138px" width="48" height="48" viewBox="0 0 48 48"><rect x="3.6" y="3.6" width="41" height="41" fill="none" stroke="#d6d6d6" stroke-width="1.8"/>
<rect x="4.4" y="4.4" width="39.4" height="4.6" fill="#8a8a8a"/>
<path d="M3.6 10 H44.6 M3.6 21.6 H44.6 M3.6 33 H44.6 M17.4 33 V44.6 M31 33 V44.6" stroke="#bdbdbd" stroke-width="1.5"/>
<circle cx="22.8" cy="20.8" r="13" fill="#292929" stroke="#d6d6d6" stroke-width="1.9"/>
<path d="M32.2 30.2 L44.8 44.8" stroke="#d6d6d6" stroke-width="2.2"/>
<rect x="15.6" y="18.8" width="3.4" height="7.6" fill="#9a9a9a"/>
<rect x="20.2" y="12.6" width="4.6" height="13.8" fill="#111" stroke="#e8e8e8" stroke-width="1.3"/>
<rect x="25.8" y="15.6" width="4.2" height="10.8" fill="#1a7ee0" stroke="#7fc0f8" stroke-width="1"/></svg>
<span class="t" style="left:1979.83px;top:193.80px;font-family:'Liberation Sans','DejaVu Sans',sans-serif;font-size:17px;color:#fff;letter-spacing:0.241px;">Analyze</span>
<span class="t" style="left:1992.23px;top:217.60px;font-family:'Liberation Sans','DejaVu Sans',sans-serif;font-size:17px;color:#fff;letter-spacing:0.403px;">Data</span>
<svg style="left:2156px;top:142px" width="114" height="114" viewBox="0 0 114 114"><circle cx="56.6" cy="56.6" r="56" fill="#fff"/><rect x="25.8" y="31" width="61.2" height="53" fill="#5c66ea"/>
<g fill="#fff"><rect x="34" y="39.4" width="18.8" height="14.2"/><rect x="60" y="39.4" width="19" height="14.2"/><rect x="34" y="61.3" width="18.8" height="14.2"/><rect x="60" y="61.3" width="19" height="14.2"/></g></svg>
<div id="brand" style="left:0;top:0;width:0;height:0;overflow:visible"><span class="t" style="left:2292.42px;top:156.40px;font-family:'Liberation Sans','DejaVu Sans',sans-serif;font-size:48.4px;color:#fff;font-weight:700;transform:scaleX(1.0143);transform-origin:left center;-webkit-text-stroke:0.9px #fff;">FINM</span><span class="t" style="left:2412.12px;top:156.40px;font-family:'Liberation Sans','DejaVu Sans',sans-serif;font-size:48.4px;color:#fff;font-weight:700;transform:scaleX(1.0296);transform-origin:left center;-webkit-text-stroke:0.9px #fff;">O</span><span class="t" style="left:2454.22px;top:156.40px;font-family:'Liberation Sans','DejaVu Sans',sans-serif;font-size:48.4px;color:#fff;font-weight:700;transform:scaleX(0.8724);transform-origin:left center;-webkit-text-stroke:0.9px #fff;">DELSLAB</span></div><!--/brand-->
<div style="left:2426.7px;top:154.8px;width:9px;height:26.2px;background:#fff;border-radius:4.5px;box-shadow:0 0 0 2.8px #292929;"></div>
<span class="t" style="left:2293.67px;top:207.90px;font-family:'Liberation Sans','DejaVu Sans',sans-serif;font-size:34px;color:#fff;letter-spacing:25.561px;">Templates</span>
</section>
<footer id="tabs-status" style="left:0;top:0;width:0;height:0;overflow:visible">
<div style="left:11px;top:1670px;width:2880px;height:48px;background:#0a0a0a;"></div>
<div style="left:11px;top:1718px;width:2880px;height:32.8px;background:#141414;"></div>
<div style="left:11px;top:1717.6px;width:2880px;height:1.2px;background:#2e2e2e;"></div>
<svg style="left:44px;top:1683px" width="14" height="20" viewBox="0 0 14 20"><path d="M10.6 3 L3.4 10 L10.6 17" fill="none" stroke="#7d7d7d" stroke-width="1.7" stroke-linecap="round" stroke-linejoin="round"/></svg>
<svg style="left:92px;top:1683px" width="14" height="20" viewBox="0 0 14 20"><path d="M3.4 3 L10.6 10 L3.4 17" fill="none" stroke="#d8d8d8" stroke-width="1.7" stroke-linecap="round" stroke-linejoin="round"/></svg>
<span class="t" style="left:190.08px;top:1685.80px;font-family:'Liberation Sans','DejaVu Sans',sans-serif;font-size:20.4px;color:#fff;letter-spacing:0.230px;">Contents</span>
<div style="left:291.6px;top:1680px;width:1.2px;height:27.8px;background:#5a5a5a;"></div>
<div style="left:432.8px;top:1680px;width:1.2px;height:27.8px;background:#5a5a5a;"></div>
<div style="left:551.6px;top:1680px;width:1.2px;height:27.8px;background:#5a5a5a;"></div>
<div style="left:722.7px;top:1680px;width:1.2px;height:27.8px;background:#5a5a5a;"></div>
<div style="left:824.8px;top:1680px;width:1.2px;height:27.8px;background:#5a5a5a;"></div>
<div style="left:924.8px;top:1680px;width:1.2px;height:27.8px;background:#5a5a5a;"></div>
<div style="left:1050.8px;top:1680px;width:1.2px;height:27.8px;background:#5a5a5a;"></div>
<div style="left:1153.8px;top:1680px;width:1.2px;height:27.8px;background:#5a5a5a;"></div>
<div style="left:1209.1px;top:1680px;width:1.2px;height:27.8px;background:#5a5a5a;"></div>
<div style="left:1270px;top:1680px;width:1.2px;height:27.8px;background:#5a5a5a;"></div>
<div style="left:1330.9px;top:1680px;width:1.2px;height:27.8px;background:#5a5a5a;"></div>
<div style="left:1458.9px;top:1680px;width:1.2px;height:27.8px;background:#5a5a5a;"></div>
<div style="left:1586.8px;top:1680px;width:1.2px;height:27.8px;background:#5a5a5a;"></div>
<div style="left:1714px;top:1680px;width:1.2px;height:27.8px;background:#5a5a5a;"></div>
<div style="left:1774.9px;top:1680px;width:1.2px;height:27.8px;background:#5a5a5a;"></div>
<div style="left:1860.1px;top:1680px;width:1.2px;height:27.8px;background:#5a5a5a;"></div>
<div style="left:1958px;top:1680px;width:1.2px;height:27.8px;background:#5a5a5a;"></div>
<div style="left:2034.7px;top:1680px;width:1.2px;height:27.8px;background:#5a5a5a;"></div>
<div style="left:299px;top:1676px;width:127.8px;height:35.8px;background:#fdef6b;border-radius:7px;"></div>
<span class="t" style="left:313.28px;top:1685.80px;font-family:'Liberation Sans','DejaVu Sans',sans-serif;font-size:20.4px;color:#111;letter-spacing:0.134px;">Dashboard</span>
<div style="left:440.2px;top:1676px;width:105.7px;height:35.8px;background:#fdef6b;border-radius:7px;"></div>
<span class="t" style="left:454.08px;top:1685.80px;font-family:'Liberation Sans','DejaVu Sans',sans-serif;font-size:20.4px;color:#111;letter-spacing:-0.382px;">Revenue</span>
<div style="left:559px;top:1676px;width:158px;height:35.8px;background:#fdef6b;border-radius:7px;"></div>
<span class="t" style="left:571.68px;top:1685.80px;font-family:'Liberation Sans','DejaVu Sans',sans-serif;font-size:20.4px;color:#111;letter-spacing:-0.740px;">COGS &amp; OPEX</span>
<div style="left:730px;top:1676px;width:89px;height:35.8px;background:#fdef6b;border-radius:7px;"></div>
<span class="t" style="left:743.28px;top:1685.80px;font-family:'Liberation Sans','DejaVu Sans',sans-serif;font-size:20.4px;color:#111;">Payroll</span>
<div style="left:932px;top:1676px;width:112.8px;height:35.8px;background:#fdef6b;border-radius:7px;"></div>
<span class="t" style="left:944.68px;top:1685.80px;font-family:'Liberation Sans','DejaVu Sans',sans-serif;font-size:20.4px;color:#111;letter-spacing:0.097px;">CapTable</span>
<div style="left:1057.9px;top:1676px;width:90.1px;height:35.8px;background:#fdef6b;border-radius:7px;"></div>
<span class="t" style="left:1070.88px;top:1685.80px;font-family:'Liberation Sans','DejaVu Sans',sans-serif;font-size:20.4px;color:#111;letter-spacing:0.175px;">Capital</span>
<div style="left:1161px;top:1676px;width:42px;height:35.8px;background:#4bb1e8;border-radius:7px;"></div>
<span class="t" style="left:1173.38px;top:1685.80px;font-family:'Liberation Sans','DejaVu Sans',sans-serif;font-size:20.4px;color:#111;letter-spacing:-1.530px;">IS</span>
<div style="left:1215.8px;top:1676px;width:48.2px;height:35.8px;background:#4bb1e8;border-radius:7px;"></div>
<span class="t" style="left:1227.62px;top:1685.80px;font-family:'Liberation Sans','DejaVu Sans',sans-serif;font-size:20.4px;color:#111;letter-spacing:-1.530px;">CF</span>
<div style="left:1277px;top:1676px;width:47.9px;height:35.8px;background:#4bb1e8;border-radius:7px;"></div>
<span class="t" style="left:1288.66px;top:1685.80px;font-family:'Liberation Sans','DejaVu Sans',sans-serif;font-size:20.4px;color:#111;letter-spacing:-1.530px;">BS</span>
<div style="left:1337.8px;top:1676px;width:115.4px;height:35.8px;background:#4bb1e8;border-radius:7px;"></div>
<span class="t" style="left:1350.98px;top:1685.80px;font-family:'Liberation Sans','DejaVu Sans',sans-serif;font-size:20.4px;color:#111;letter-spacing:-0.269px;">Scenarios</span>
<div style="left:1466px;top:1676px;width:115.1px;height:35.8px;background:#4bb1e8;border-radius:7px;"></div>
<span class="t" style="left:1478.68px;top:1685.80px;font-family:'Liberation Sans','DejaVu Sans',sans-serif;font-size:20.4px;color:#111;letter-spacing:0.678px;">Valuation</span>
<div style="left:1594px;top:1676px;width:114px;height:35.8px;background:#4bb1e8;border-radius:7px;"></div>
<span class="t" style="left:1607.48px;top:1685.80px;font-family:'Liberation Sans','DejaVu Sans',sans-serif;font-size:20.4px;color:#111;letter-spacing:0.131px;">Summary</span>
<div style="left:1721.2px;top:1676px;width:47.8px;height:35.8px;background:#4bb1e8;border-radius:7px;"></div>
<span class="t" style="left:1732.91px;top:1685.80px;font-family:'Liberation Sans','DejaVu Sans',sans-serif;font-size:20.4px;color:#111;letter-spacing:-1.530px;">BE</span>
<div style="left:1782px;top:1676px;width:72px;height:35.8px;background:#4bb1e8;border-radius:7px;"></div>
<span class="t" style="left:1794.98px;top:1685.80px;font-family:'Liberation Sans','DejaVu Sans',sans-serif;font-size:20.4px;color:#111;letter-spacing:-1.116px;">ROIC</span>
<div style="left:1867.3px;top:1676px;width:84.7px;height:35.8px;background:#4bb1e8;border-radius:7px;"></div>
<span class="t" style="left:1879.48px;top:1685.80px;font-family:'Liberation Sans','DejaVu Sans',sans-serif;font-size:20.4px;color:#111;letter-spacing:-0.105px;">Charts</span>
<div style="left:1964.9px;top:1676px;width:64.1px;height:35.8px;background:#4bb1e8;border-radius:7px;"></div>
<span class="t" style="left:1977.91px;top:1685.80px;font-family:'Liberation Sans','DejaVu Sans',sans-serif;font-size:20.4px;color:#111;letter-spacing:-1.530px;">KPIs</span>
<div style="left:2042px;top:1676px;width:29.8px;height:35.8px;overflow:hidden"><div style="left:0;top:0;width:110px;height:35.8px;background:#4bb1e8;border-radius:7px;"></div><span class="t" style="left:12.2px;top:9.4px;font-size:20.4px;color:#111;">Scenarios</span></div>
<svg style="left:820px;top:1669px" width="112" height="46" viewBox="0 0 112 46"><defs><linearGradient id="capg" x1="0" y1="0" x2="0" y2="1"><stop offset="0" stop-color="#ffffff"/><stop offset="0.45" stop-color="#fffef4"/><stop offset="1" stop-color="#fdf9d2"/></linearGradient></defs><path d="M5.6 1 Q11.7 1 11.7 7 V36.8 a6 6 0 0 0 6 6 H93.4 a6 6 0 0 0 6 -6 V7 Q99.4 1 105.5 1 Z" fill="url(#capg)"/></svg>
<span class="t" style="left:843.68px;top:1681.00px;font-family:'Liberation Sans','DejaVu Sans',sans-serif;font-size:20.4px;color:#1c1c1c;letter-spacing:-1.226px;-webkit-text-stroke:0.45px #1c1c1c;">CAPEX</span>
<div style="left:844.4px;top:1705px;width:62.6px;height:2.8px;background:#1e7e45;border-radius:1px;"></div>
<div style="left:2086.8px;top:1690.4px;width:4px;height:4px;background:#e0e0e0;border-radius:2px;"></div>
<div style="left:2093.4px;top:1690.4px;width:4px;height:4px;background:#e0e0e0;border-radius:2px;"></div>
<div style="left:2100px;top:1690.4px;width:4px;height:4px;background:#e0e0e0;border-radius:2px;"></div>
<svg style="left:2133px;top:1683px" width="20" height="20" viewBox="0 0 20 20"><path d="M10.3 1.6 V18.4 M1.8 10 H18.8" stroke="#e8e8e8" stroke-width="1.7"/></svg>
<div style="left:2190.4px;top:1686.6px;width:3px;height:3px;background:#e8e8e8;"></div>
<div style="left:2190.4px;top:1692.8px;width:3px;height:3px;background:#e8e8e8;"></div>
<div style="left:2190.4px;top:1699px;width:3px;height:3px;background:#e8e8e8;"></div>
<div style="left:2216.5px;top:1680px;width:643.5px;height:26px;background:#161616;border-radius:13px;"></div>
<svg style="left:2222px;top:1685px" width="14" height="16" viewBox="0 0 14 16"><path d="M11.6 2.2 V13.8 L2.2 8 Z" fill="#a0a0a0" stroke="#a0a0a0" stroke-width="1.2" stroke-linejoin="round"/></svg>
<svg style="left:2841px;top:1685px" width="14" height="16" viewBox="0 0 14 16"><path d="M2.4 2.2 V13.8 L11.8 8 Z" fill="#a0a0a0" stroke="#a0a0a0" stroke-width="1.2" stroke-linejoin="round"/></svg>
<div style="left:2242px;top:1687.2px;width:55.4px;height:12px;background:#9c9c9c;border-radius:6px;"></div>
<div style="left:2860px;top:278px;width:31px;height:1392px;background:#0a0a0a;"></div>
<div style="left:2863.3px;top:279.5px;width:25.6px;height:1390px;background:#161616;border-radius:12.8px;"></div>
<svg style="left:2868px;top:284px" width="16" height="14" viewBox="0 0 16 14"><path d="M2.2 11.4 H13.8 L8 2.4 Z" fill="#9c9c9c" stroke="#9c9c9c" stroke-width="1.4" stroke-linejoin="round"/></svg>
<svg style="left:2868px;top:1652px" width="16" height="14" viewBox="0 0 16 14"><path d="M2.2 2.6 H13.8 L8 11.6 Z" fill="#9c9c9c" stroke="#9c9c9c" stroke-width="1.4" stroke-linejoin="round"/></svg>
<div style="left:2870px;top:304px;width:12px;height:1310.4px;background:#9c9c9c;border-radius:6px;"></div>
<span class="t" style="left:26.81px;top:1727.30px;font-family:'Liberation Sans','DejaVu Sans',sans-serif;font-size:15.4px;color:#f0f0f0;letter-spacing:-0.278px;">Ready</span>
<svg style="left:97px;top:1723px" width="26" height="24" viewBox="0 0 26 24"><path d="M2.6 21 V3.6 H22.2 V10" fill="none" stroke="#e6e6e6" stroke-width="1.5"/><path d="M2.6 7.4 H22.2" stroke="#e6e6e6" stroke-width="1.5"/>
<path d="M5.6 11.4 H11 M5.6 14.8 H9.6 M5.6 18.2 H9.6" stroke="#e6e6e6" stroke-width="1.5"/>
<circle cx="17" cy="16.2" r="5.6" fill="none" stroke="#e6e6e6" stroke-width="1.5"/><circle cx="17" cy="16.2" r="2.4" fill="#e6e6e6"/><path d="M2.6 21 H11.6" stroke="#e6e6e6" stroke-width="1.5"/></svg>
<svg style="left:144px;top:1722px" width="26" height="26" viewBox="0 0 26 26"><circle cx="11.4" cy="4.6" r="2.5" fill="none" stroke="#e6e6e6" stroke-width="1.4"/>
<path d="M3.2 8 C8 10.4 14.8 10.4 19.6 8 M9 10.2 V15 L5.4 22.6 M13.8 10.2 V14.6 L15 17" fill="none" stroke="#e6e6e6" stroke-width="1.5" stroke-linecap="round" stroke-linejoin="round"/>
<path d="M13.4 15.4 L23 24 M23 15.4 L13.4 24" stroke="#e6e6e6" stroke-width="1.5" stroke-linecap="round"/></svg>
<span class="t" style="left:172.91px;top:1727.30px;font-family:'Liberation Sans','DejaVu Sans',sans-serif;font-size:15.4px;color:#fff;font-weight:700;letter-spacing:0.187px;">Accessibility: Investigate</span>
<div style="left:2445px;top:1718.6px;width:59.6px;height:32px;background:#262626;"></div>
<svg style="left:2462px;top:1723px" width="24" height="23" viewBox="0 0 24 23"><rect x="2.4" y="2.2" width="19.2" height="18.6" fill="none" stroke="#f0f0f0" stroke-width="1.6"/><path d="M8.8 2.2 V20.8 M15.2 2.2 V20.8 M2.4 8.4 H21.6 M2.4 14.6 H21.6" stroke="#f0f0f0" stroke-width="1.5"/></svg>
<svg style="left:2522px;top:1723px" width="26" height="23" viewBox="0 0 26 23"><rect x="2.4" y="2.2" width="21" height="18.6" fill="none" stroke="#f0f0f0" stroke-width="1.6"/><rect x="6.6" y="5.8" width="12.6" height="11.4" fill="none" stroke="#f0f0f0" stroke-width="1.4"/><path d="M9.4 9 H16.4 M9.4 11.6 H16.4 M9.4 14.2 H16.4" stroke="#f0f0f0" stroke-width="1.2"/></svg>
<svg style="left:2582px;top:1723px" width="26" height="23" viewBox="0 0 26 23"><rect x="2.4" y="2.2" width="20.6" height="18.6" fill="none" stroke="#f0f0f0" stroke-width="1.6"/><path d="M2.4 12.5 H15.4 V2.2 M8.8 2.2 V12.5" fill="none" stroke="#f0f0f0" stroke-width="1.5"/></svg>
<div style="left:2633.2px;top:1734px;width:11.6px;height:1.5px;background:#d0d0d0;"></div>
<div style="left:2652.8px;top:1733.6px;width:148.4px;height:2px;background:#adadad;"></div>
<div style="left:2725.8px;top:1730.8px;width:1.6px;height:8.2px;background:#b8b8b8;"></div>
<div style="left:2732.7px;top:1726.2px;width:8.4px;height:16.8px;background:#bdbdbd;border-radius:1px;"></div>
<svg style="left:2808px;top:1728px" width="14" height="14" viewBox="0 0 14 14"><path d="M6.8 1 V12.8 M0.8 6.9 H12.8" stroke="#d8d8d8" stroke-width="1.5"/></svg>
<span class="t" style="left:2840.11px;top:1727.30px;font-family:'Liberation Sans','DejaVu Sans',sans-serif;font-size:15.4px;color:#f0f0f0;">140%</span>
</footer>
</body></html>
